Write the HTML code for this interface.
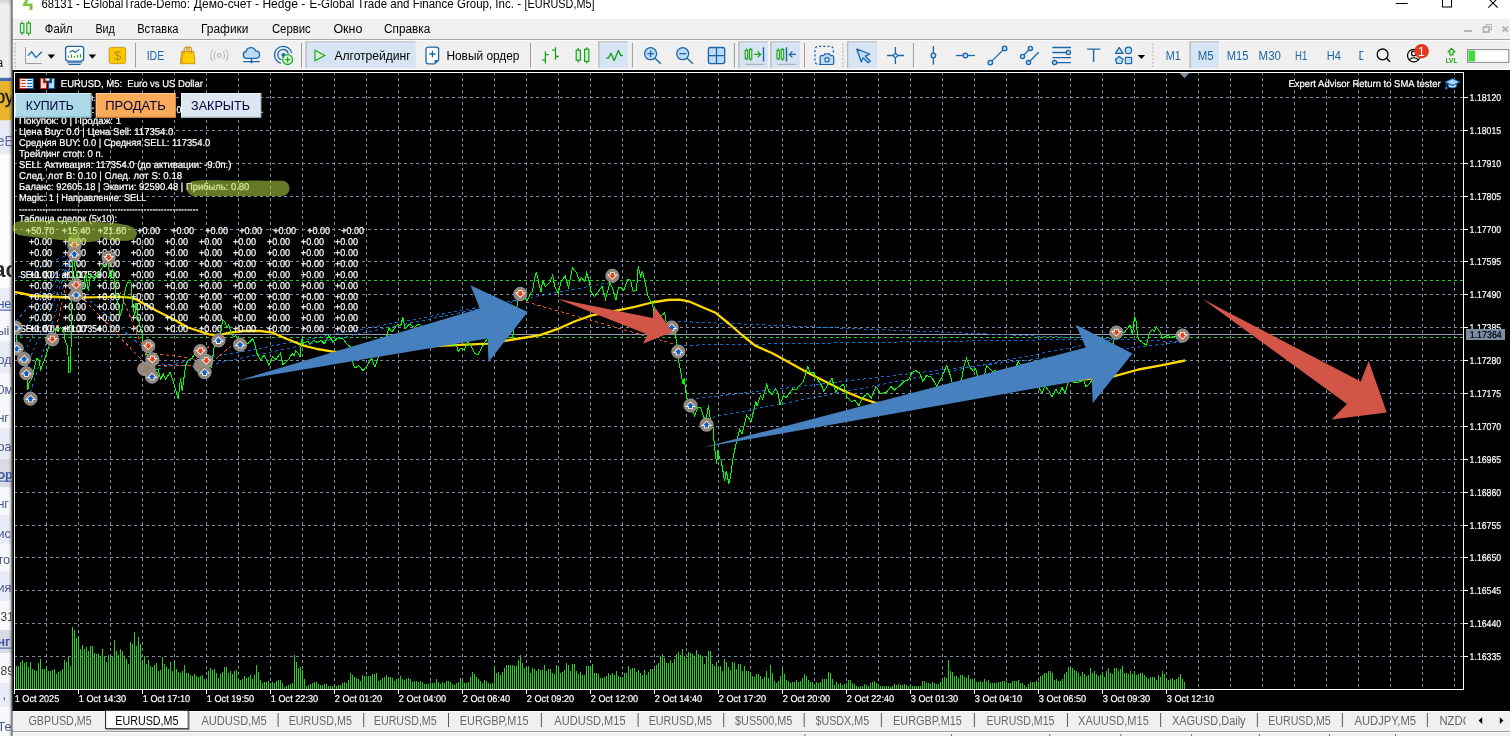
<!DOCTYPE html>
<html lang="ru"><head><meta charset="utf-8"><title>EURUSD,M5</title>
<style>html,body{margin:0;padding:0;background:#f0f0f0;overflow:hidden}svg{display:block;will-change:transform}text{font-family:"Liberation Sans",sans-serif;white-space:pre}.ui{font-size:12px;fill:#000}.tf{font-size:12.5px;fill:#1c64a6}.tab{font-size:12.3px;fill:#676767}.ct{text-rendering:geometricPrecision;font-size:9.9px;fill:#fff;stroke:#fff;stroke-width:0.22px}.ax{text-rendering:geometricPrecision;font-size:9.9px;fill:#fff;stroke:#fff;stroke-width:0.2px}.btn{font-size:12px;fill:#00003c}</style></head>
<body>
<svg width="1510" height="736" viewBox="0 0 1510 736">
<rect x="12" y="70" width="1498" height="641" fill="#000"/>
<clipPath id="cc"><rect x="15" y="73" width="1448" height="616"/></clipPath>
<path d="M46.5,72V689M78.5,72V689M110.5,72V689M142.5,72V689M174.5,72V689M206.5,72V689M238.5,72V689M270.5,72V689M302.5,72V689M334.5,72V689M366.5,72V689M398.5,72V689M430.5,72V689M462.5,72V689M494.5,72V689M526.5,72V689M558.5,72V689M590.5,72V689M622.5,72V689M654.5,72V689M686.5,72V689M718.5,72V689M750.5,72V689M782.5,72V689M814.5,72V689M846.5,72V689M878.5,72V689M910.5,72V689M942.5,72V689M974.5,72V689M1006.5,72V689M1038.5,72V689M1070.5,72V689M1102.5,72V689M1134.5,72V689M1166.5,72V689M1198.5,72V689M1230.5,72V689M1262.5,72V689M1294.5,72V689M1326.5,72V689M1358.5,72V689M1390.5,72V689M1422.5,72V689M1454.5,72V689" stroke="#7d8ba1" stroke-width="1" stroke-dasharray="3 3" fill="none" shape-rendering="crispEdges"/>
<path d="M14,97.5H1463M14,130.5H1463M14,163.5H1463M14,196.5H1463M14,229.5H1463M14,261.5H1463M14,294.5H1463M14,327.5H1463M14,360.5H1463M14,393.5H1463M14,426.5H1463M14,459.5H1463M14,492.5H1463M14,525.5H1463M14,557.5H1463M14,590.5H1463M14,623.5H1463M14,656.5H1463" stroke="#7d8ba1" stroke-width="1" stroke-dasharray="3 3" fill="none" shape-rendering="crispEdges"/>
<g clip-path="url(#cc)">
<path d="M16.5,689V666M18.5,689V666M20.5,689V662M22.5,689V660M24.5,689V663M26.5,689V662M28.5,689V667M30.5,689V662M32.5,689V669M34.5,689V670M36.5,689V671M38.5,689V663M40.5,689V659M42.5,689V669M44.5,689V669M46.5,689V666M48.5,689V671M50.5,689V671M52.5,689V670M54.5,689V669M56.5,689V674M58.5,689V672M60.5,689V671M62.5,689V669M64.5,689V660M66.5,689V662M68.5,689V656M70.5,689V666M72.5,689V627M74.5,689V630M76.5,689V638M78.5,689V636M80.5,689V649M82.5,689V645M84.5,689V649M86.5,689V647M88.5,689V651M90.5,689V646M92.5,689V646M94.5,689V653M96.5,689V654M98.5,689V654M100.5,689V656M102.5,689V649M104.5,689V657M106.5,689V662M108.5,689V655M110.5,689V656M112.5,689V657M114.5,689V640M116.5,689V651M118.5,689V655M120.5,689V649M122.5,689V651M124.5,689V656M126.5,689V659M128.5,689V664M130.5,689V642M132.5,689V644M134.5,689V632M136.5,689V646M138.5,689V637M140.5,689V644M142.5,689V662M144.5,689V656M146.5,689V664M148.5,689V660M150.5,689V666M152.5,689V667M154.5,689V665M156.5,689V663M158.5,689V671M160.5,689V670M162.5,689V657M164.5,689V664M166.5,689V667M168.5,689V669M170.5,689V662M172.5,689V671M174.5,689V662M176.5,689V669M178.5,689V672M180.5,689V673M182.5,689V671M184.5,689V665M186.5,689V673M188.5,689V673M190.5,689V675M192.5,689V676M194.5,689V674M196.5,689V676M198.5,689V677M200.5,689V676M202.5,689V675M204.5,689V679M206.5,689V680M208.5,689V671M210.5,689V668M212.5,689V670M214.5,689V669M216.5,689V673M218.5,689V678M220.5,689V674M222.5,689V672M224.5,689V667M226.5,689V667M228.5,689V673M230.5,689V671M232.5,689V674M234.5,689V671M236.5,689V670M238.5,689V679M240.5,689V680M242.5,689V679M244.5,689V676M246.5,689V678M248.5,689V677M250.5,689V675M252.5,689V679M254.5,689V675M256.5,689V665M258.5,689V672M260.5,689V680M262.5,689V683M264.5,689V682M266.5,689V682M268.5,689V681M270.5,689V683M272.5,689V682M274.5,689V683M276.5,689V681M278.5,689V680M280.5,689V680M282.5,689V683M284.5,689V687M286.5,689V686M288.5,689V685M290.5,689V684M292.5,689V683M294.5,689V655M296.5,689V662M298.5,689V668M300.5,689V667M302.5,689V670M304.5,689V679M306.5,689V686M308.5,689V685M310.5,689V684M312.5,689V683M314.5,689V682M316.5,689V682M318.5,689V684M320.5,689V685M322.5,689V685M324.5,689V684M326.5,689V684M328.5,689V686M330.5,689V686M332.5,689V686M334.5,689V686M336.5,689V686M338.5,689V685M340.5,689V685M342.5,689V683M344.5,689V682M346.5,689V683M348.5,689V680M350.5,689V673M352.5,689V675M354.5,689V677M356.5,689V678M358.5,689V679M360.5,689V681M362.5,689V675M364.5,689V676M366.5,689V676M368.5,689V676M370.5,689V676M372.5,689V674M374.5,689V674M376.5,689V673M378.5,689V681M380.5,689V680M382.5,689V678M384.5,689V677M386.5,689V675M388.5,689V677M390.5,689V677M392.5,689V678M394.5,689V681M396.5,689V679M398.5,689V679M400.5,689V676M402.5,689V679M404.5,689V680M406.5,689V679M408.5,689V678M410.5,689V679M412.5,689V682M414.5,689V681M416.5,689V681M418.5,689V682M420.5,689V681M422.5,689V682M424.5,689V684M426.5,689V684M428.5,689V684M430.5,689V682M432.5,689V683M434.5,689V683M436.5,689V679M438.5,689V682M440.5,689V684M442.5,689V682M444.5,689V683M446.5,689V681M448.5,689V681M450.5,689V682M452.5,689V684M454.5,689V685M456.5,689V683M458.5,689V682M460.5,689V678M462.5,689V681M464.5,689V683M466.5,689V683M468.5,689V682M470.5,689V677M472.5,689V672M474.5,689V674M476.5,689V677M478.5,689V679M480.5,689V681M482.5,689V683M484.5,689V680M486.5,689V681M488.5,689V683M490.5,689V684M492.5,689V683M494.5,689V666M496.5,689V673M498.5,689V672M500.5,689V675M502.5,689V672M504.5,689V668M506.5,689V665M508.5,689V665M510.5,689V665M512.5,689V665M514.5,689V666M516.5,689V666M518.5,689V660M520.5,689V655M522.5,689V663M524.5,689V668M526.5,689V667M528.5,689V666M530.5,689V673M532.5,689V668M534.5,689V669M536.5,689V671M538.5,689V669M540.5,689V670M542.5,689V670M544.5,689V665M546.5,689V671M548.5,689V669M550.5,689V669M552.5,689V673M554.5,689V674M556.5,689V665M558.5,689V667M560.5,689V673M562.5,689V672M564.5,689V670M566.5,689V663M568.5,689V665M570.5,689V671M572.5,689V664M574.5,689V664M576.5,689V671M578.5,689V674M580.5,689V672M582.5,689V675M584.5,689V675M586.5,689V666M588.5,689V666M590.5,689V666M592.5,689V664M594.5,689V673M596.5,689V673M598.5,689V674M600.5,689V678M602.5,689V678M604.5,689V677M606.5,689V676M608.5,689V673M610.5,689V675M612.5,689V673M614.5,689V675M616.5,689V671M618.5,689V676M620.5,689V677M622.5,689V677M624.5,689V673M626.5,689V673M628.5,689V666M630.5,689V669M632.5,689V668M634.5,689V668M636.5,689V672M638.5,689V670M640.5,689V673M642.5,689V675M644.5,689V670M646.5,689V675M648.5,689V672M650.5,689V669M652.5,689V669M654.5,689V669M656.5,689V665M658.5,689V663M660.5,689V656M662.5,689V654M664.5,689V658M666.5,689V663M668.5,689V663M670.5,689V660M672.5,689V663M674.5,689V659M676.5,689V654M678.5,689V652M680.5,689V655M682.5,689V649M684.5,689V656M686.5,689V658M688.5,689V652M690.5,689V653M692.5,689V654M694.5,689V657M696.5,689V650M698.5,689V654M700.5,689V655M702.5,689V656M704.5,689V664M706.5,689V657M708.5,689V651M710.5,689V651M712.5,689V664M714.5,689V666M716.5,689V662M718.5,689V667M720.5,689V666M722.5,689V671M724.5,689V659M726.5,689V662M728.5,689V667M730.5,689V670M732.5,689V662M734.5,689V663M736.5,689V669M738.5,689V664M740.5,689V664M742.5,689V671M744.5,689V666M746.5,689V671M748.5,689V671M750.5,689V672M752.5,689V676M754.5,689V677M756.5,689V674M758.5,689V674M760.5,689V676M762.5,689V679M764.5,689V677M766.5,689V671M768.5,689V678M770.5,689V665M772.5,689V673M774.5,689V681M776.5,689V683M778.5,689V681M780.5,689V676M782.5,689V669M784.5,689V674M786.5,689V680M788.5,689V681M790.5,689V683M792.5,689V682M794.5,689V682M796.5,689V680M798.5,689V682M800.5,689V681M802.5,689V678M804.5,689V674M806.5,689V676M808.5,689V680M810.5,689V682M812.5,689V682M814.5,689V684M816.5,689V682M818.5,689V683M820.5,689V682M822.5,689V679M824.5,689V679M826.5,689V679M828.5,689V672M830.5,689V673M832.5,689V679M834.5,689V685M836.5,689V682M838.5,689V684M840.5,689V683M842.5,689V685M844.5,689V684M846.5,689V683M848.5,689V680M850.5,689V680M852.5,689V683M854.5,689V684M856.5,689V686M858.5,689V687M860.5,689V686M862.5,689V686M864.5,689V684M866.5,689V685M868.5,689V686M870.5,689V683M872.5,689V682M874.5,689V681M876.5,689V683M878.5,689V684M880.5,689V686M882.5,689V686M884.5,689V686M886.5,689V686M888.5,689V686M890.5,689V687M892.5,689V686M894.5,689V684M896.5,689V685M898.5,689V684M900.5,689V685M902.5,689V685M904.5,689V684M906.5,689V685M908.5,689V686M910.5,689V686M912.5,689V686M914.5,689V686M916.5,689V686M918.5,689V686M920.5,689V686M922.5,689V681M924.5,689V681M926.5,689V683M928.5,689V683M930.5,689V684M932.5,689V682M934.5,689V683M936.5,689V684M938.5,689V684M940.5,689V682M942.5,689V678M944.5,689V677M946.5,689V678M948.5,689V660M950.5,689V671M952.5,689V672M954.5,689V676M956.5,689V676M958.5,689V678M960.5,689V675M962.5,689V675M964.5,689V677M966.5,689V678M968.5,689V675M970.5,689V679M972.5,689V679M974.5,689V681M976.5,689V682M978.5,689V682M980.5,689V681M982.5,689V682M984.5,689V679M986.5,689V681M988.5,689V680M990.5,689V683M992.5,689V683M994.5,689V683M996.5,689V683M998.5,689V682M1000.5,689V682M1002.5,689V681M1004.5,689V681M1006.5,689V682M1008.5,689V683M1010.5,689V683M1012.5,689V681M1014.5,689V681M1016.5,689V681M1018.5,689V680M1020.5,689V683M1022.5,689V683M1024.5,689V685M1026.5,689V687M1028.5,689V684M1030.5,689V682M1032.5,689V682M1034.5,689V682M1036.5,689V681M1038.5,689V682M1040.5,689V676M1042.5,689V675M1044.5,689V673M1046.5,689V673M1048.5,689V671M1050.5,689V671M1052.5,689V673M1054.5,689V680M1056.5,689V679M1058.5,689V681M1060.5,689V681M1062.5,689V679M1064.5,689V674M1066.5,689V672M1068.5,689V667M1070.5,689V669M1072.5,689V668M1074.5,689V670M1076.5,689V671M1078.5,689V673M1080.5,689V676M1082.5,689V672M1084.5,689V674M1086.5,689V676M1088.5,689V675M1090.5,689V668M1092.5,689V673M1094.5,689V671M1096.5,689V674M1098.5,689V676M1100.5,689V675M1102.5,689V672M1104.5,689V677M1106.5,689V671M1108.5,689V668M1110.5,689V673M1112.5,689V674M1114.5,689V668M1116.5,689V668M1118.5,689V671M1120.5,689V669M1122.5,689V666M1124.5,689V673M1126.5,689V673M1128.5,689V674M1130.5,689V671M1132.5,689V674M1134.5,689V671M1136.5,689V675M1138.5,689V674M1140.5,689V673M1142.5,689V673M1144.5,689V675M1146.5,689V677M1148.5,689V679M1150.5,689V677M1152.5,689V677M1154.5,689V677M1156.5,689V680M1158.5,689V675M1160.5,689V677M1162.5,689V671M1164.5,689V674M1166.5,689V680M1168.5,689V680M1170.5,689V679M1172.5,689V678M1174.5,689V680M1176.5,689V679M1178.5,689V677M1180.5,689V674M1182.5,689V679M1184.5,689V682" stroke="#2fc92f" stroke-width="1" fill="none" shape-rendering="crispEdges"/>
<path d="M14,280.5H1463M14,337.5H1463" stroke="#2ccb2c" stroke-width="1" stroke-dasharray="3 3" fill="none" shape-rendering="crispEdges"/>
<path d="M14,334.5H1463" stroke="#8f9bb0" stroke-width="1" fill="none" shape-rendering="crispEdges"/>
<path d="M16.0,321.4L74.4,251.7M16.7,342.3L74.4,251.7M24.2,352.7L74.4,251.7M26.4,366.9L74.4,251.7M30.5,392.4L74.4,251.7M76.2,288.5L148.3,352.4M152.0,370.3L200.4,357.5M144.3,362.6L206.3,367.2M204.6,365.8L520.3,300.2M200.4,359.5L612.4,282.1M671.7,321.2L1182.5,341.9M690.5,399.2L1182.5,341.9M678.3,345.3L1116.4,338.8M706.6,418.4L1116.4,338.8M-20.0,294.5L74.4,251.7" stroke="#0b6acb" stroke-width="1" stroke-dasharray="3 3" fill="none" shape-rendering="crispEdges"/>
<path d="M52.3,345.6L74.4,247.7M108.6,263.9L152.0,370.3M76.2,291.4L144.3,362.6M148.3,352.4L200.4,359.5M152.4,365.7L204.6,365.8M200.4,357.5L218.5,334.0M206.3,367.2L240.1,338.4M520.3,300.2L678.3,345.3" stroke="#e8501e" stroke-width="1" stroke-dasharray="3 3" fill="none" shape-rendering="crispEdges"/>
<polyline points="14.0,292.0 20.0,293.0 34.5,296.0 71.0,297.5 100.0,297.2 117.7,296.6 130.0,297.6 137.0,299.7 147.0,305.6 157.0,311.0 174.4,319.8 188.0,327.5 209.0,334.4 217.5,335.3 229.5,332.7 243.3,331.0 260.5,331.0 272.6,332.7 286.4,338.7 303.6,345.6 317.3,349.0 332.8,351.7 360.0,352.5 400.0,349.0 438.5,345.8 488.0,343.7 510.0,340.0 540.0,335.2 557.2,329.2 574.4,321.5 591.7,315.4 614.0,311.1 634.7,306.8 652.0,302.5 667.4,300.0 679.5,299.6 689.8,301.7 703.6,307.7 715.6,312.8 729.4,324.0 743.2,336.0 755.2,345.6 772.4,353.3 789.7,362.8 807.8,372.7 826.2,382.0 844.7,391.2 860.9,398.0 874.7,402.7 900.0,404.5 930.0,401.5 960.0,397.0 1000.0,390.0 1040.0,384.0 1074.8,380.4 1113.6,376.4 1138.4,369.5 1162.3,365.1 1185.1,360.5" fill="none" stroke="#ffd800" stroke-width="2.3" stroke-linejoin="round"/>
</g>
<text x="19.0" y="101.0" class="ct" textLength="76.3" lengthAdjust="spacingAndGlyphs">Return to SMA: стати.</text>
<text x="19.0" y="112.9" class="ct" textLength="75.5" lengthAdjust="spacingAndGlyphs">Серия: 4 | Шаг:</text>
<text x="100.0" y="112.9" class="ct" textLength="73.0" lengthAdjust="spacingAndGlyphs">SELL-сетка: акт</text>
<text x="176.6" y="112.9" class="ct" textLength="4.8" lengthAdjust="spacingAndGlyphs">0</text>
<text x="186.0" y="112.9" class="ct" textLength="77.4" lengthAdjust="spacingAndGlyphs">Ожидание сигнала.</text>
<text x="19.0" y="123.9" class="ct" textLength="102.3" lengthAdjust="spacingAndGlyphs">Покупок: 0 | Продаж: 1</text>
<text x="19.0" y="134.8" class="ct" textLength="154.4" lengthAdjust="spacingAndGlyphs">Цена Buy: 0.0 | Цена Sell: 117354.0</text>
<text x="19.0" y="145.8" class="ct" textLength="191.3" lengthAdjust="spacingAndGlyphs">Средняя BUY: 0.0 | Средняя SELL: 117354.0</text>
<text x="19.0" y="156.7" class="ct" textLength="84.4" lengthAdjust="spacingAndGlyphs">Трейлинг стоп: 0 п.</text>
<text x="19.0" y="167.7" class="ct" textLength="212.4" lengthAdjust="spacingAndGlyphs">SELL Активация: 117354.0 (до активации: -9.0п.)</text>
<text x="19.0" y="178.6" class="ct" textLength="163.2" lengthAdjust="spacingAndGlyphs">След. лот B: 0.10 | След. лот S: 0.18</text>
<text x="19.0" y="189.6" class="ct" textLength="230.2" lengthAdjust="spacingAndGlyphs">Баланс: 92605.18 | Эквити: 92590.48 | Прибыль: 0.80</text>
<text x="19.0" y="200.6" class="ct" textLength="127.4" lengthAdjust="spacingAndGlyphs">Magic: 1 | Направление: SELL</text>
<text x="19.3" y="211.95" class="ct" textLength="179.0" lengthAdjust="spacing" style="font-size:7.4px;stroke-width:0.3px">--------------------------------------------------------------</text>
<text x="19.0" y="222.4" class="ct" textLength="98.1" lengthAdjust="spacingAndGlyphs">Таблица сделок (5x10):</text>
<text x="25.8" y="234.1" class="ct" textLength="28.5" lengthAdjust="spacingAndGlyphs">+50.70</text>
<text x="62.0" y="234.1" class="ct" textLength="28.5" lengthAdjust="spacingAndGlyphs">+15.40</text>
<text x="97.8" y="234.1" class="ct" textLength="28.5" lengthAdjust="spacingAndGlyphs">+21.60</text>
<text x="137.2" y="234.1" class="ct" textLength="23.0" lengthAdjust="spacingAndGlyphs">+0.00</text>
<text x="171.2" y="234.1" class="ct" textLength="23.0" lengthAdjust="spacingAndGlyphs">+0.00</text>
<text x="205.2" y="234.1" class="ct" textLength="23.0" lengthAdjust="spacingAndGlyphs">+0.00</text>
<text x="239.2" y="234.1" class="ct" textLength="23.0" lengthAdjust="spacingAndGlyphs">+0.00</text>
<text x="273.2" y="234.1" class="ct" textLength="23.0" lengthAdjust="spacingAndGlyphs">+0.00</text>
<text x="307.2" y="234.1" class="ct" textLength="23.0" lengthAdjust="spacingAndGlyphs">+0.00</text>
<text x="341.2" y="234.1" class="ct" textLength="23.0" lengthAdjust="spacingAndGlyphs">+0.00</text>
<text x="29.0" y="244.8" class="ct" textLength="23.0" lengthAdjust="spacingAndGlyphs">+0.00</text>
<text x="63.0" y="244.8" class="ct" textLength="23.0" lengthAdjust="spacingAndGlyphs">+0.00</text>
<text x="97.0" y="244.8" class="ct" textLength="23.0" lengthAdjust="spacingAndGlyphs">+0.00</text>
<text x="131.0" y="244.8" class="ct" textLength="23.0" lengthAdjust="spacingAndGlyphs">+0.00</text>
<text x="165.0" y="244.8" class="ct" textLength="23.0" lengthAdjust="spacingAndGlyphs">+0.00</text>
<text x="199.0" y="244.8" class="ct" textLength="23.0" lengthAdjust="spacingAndGlyphs">+0.00</text>
<text x="233.0" y="244.8" class="ct" textLength="23.0" lengthAdjust="spacingAndGlyphs">+0.00</text>
<text x="267.0" y="244.8" class="ct" textLength="23.0" lengthAdjust="spacingAndGlyphs">+0.00</text>
<text x="301.0" y="244.8" class="ct" textLength="23.0" lengthAdjust="spacingAndGlyphs">+0.00</text>
<text x="335.0" y="244.8" class="ct" textLength="23.0" lengthAdjust="spacingAndGlyphs">+0.00</text>
<text x="29.0" y="255.8" class="ct" textLength="23.0" lengthAdjust="spacingAndGlyphs">+0.00</text>
<text x="63.0" y="255.8" class="ct" textLength="23.0" lengthAdjust="spacingAndGlyphs">+0.00</text>
<text x="97.0" y="255.8" class="ct" textLength="23.0" lengthAdjust="spacingAndGlyphs">+0.00</text>
<text x="131.0" y="255.8" class="ct" textLength="23.0" lengthAdjust="spacingAndGlyphs">+0.00</text>
<text x="165.0" y="255.8" class="ct" textLength="23.0" lengthAdjust="spacingAndGlyphs">+0.00</text>
<text x="199.0" y="255.8" class="ct" textLength="23.0" lengthAdjust="spacingAndGlyphs">+0.00</text>
<text x="233.0" y="255.8" class="ct" textLength="23.0" lengthAdjust="spacingAndGlyphs">+0.00</text>
<text x="267.0" y="255.8" class="ct" textLength="23.0" lengthAdjust="spacingAndGlyphs">+0.00</text>
<text x="301.0" y="255.8" class="ct" textLength="23.0" lengthAdjust="spacingAndGlyphs">+0.00</text>
<text x="335.0" y="255.8" class="ct" textLength="23.0" lengthAdjust="spacingAndGlyphs">+0.00</text>
<text x="29.0" y="266.7" class="ct" textLength="23.0" lengthAdjust="spacingAndGlyphs">+0.00</text>
<text x="63.0" y="266.7" class="ct" textLength="23.0" lengthAdjust="spacingAndGlyphs">+0.00</text>
<text x="97.0" y="266.7" class="ct" textLength="23.0" lengthAdjust="spacingAndGlyphs">+0.00</text>
<text x="131.0" y="266.7" class="ct" textLength="23.0" lengthAdjust="spacingAndGlyphs">+0.00</text>
<text x="165.0" y="266.7" class="ct" textLength="23.0" lengthAdjust="spacingAndGlyphs">+0.00</text>
<text x="199.0" y="266.7" class="ct" textLength="23.0" lengthAdjust="spacingAndGlyphs">+0.00</text>
<text x="233.0" y="266.7" class="ct" textLength="23.0" lengthAdjust="spacingAndGlyphs">+0.00</text>
<text x="267.0" y="266.7" class="ct" textLength="23.0" lengthAdjust="spacingAndGlyphs">+0.00</text>
<text x="301.0" y="266.7" class="ct" textLength="23.0" lengthAdjust="spacingAndGlyphs">+0.00</text>
<text x="335.0" y="266.7" class="ct" textLength="23.0" lengthAdjust="spacingAndGlyphs">+0.00</text>
<text x="29.0" y="277.6" class="ct" textLength="23.0" lengthAdjust="spacingAndGlyphs">+0.00</text>
<text x="63.0" y="277.6" class="ct" textLength="23.0" lengthAdjust="spacingAndGlyphs">+0.00</text>
<text x="97.0" y="277.6" class="ct" textLength="23.0" lengthAdjust="spacingAndGlyphs">+0.00</text>
<text x="131.0" y="277.6" class="ct" textLength="23.0" lengthAdjust="spacingAndGlyphs">+0.00</text>
<text x="165.0" y="277.6" class="ct" textLength="23.0" lengthAdjust="spacingAndGlyphs">+0.00</text>
<text x="199.0" y="277.6" class="ct" textLength="23.0" lengthAdjust="spacingAndGlyphs">+0.00</text>
<text x="233.0" y="277.6" class="ct" textLength="23.0" lengthAdjust="spacingAndGlyphs">+0.00</text>
<text x="267.0" y="277.6" class="ct" textLength="23.0" lengthAdjust="spacingAndGlyphs">+0.00</text>
<text x="301.0" y="277.6" class="ct" textLength="23.0" lengthAdjust="spacingAndGlyphs">+0.00</text>
<text x="335.0" y="277.6" class="ct" textLength="23.0" lengthAdjust="spacingAndGlyphs">+0.00</text>
<text x="29.0" y="288.6" class="ct" textLength="23.0" lengthAdjust="spacingAndGlyphs">+0.00</text>
<text x="63.0" y="288.6" class="ct" textLength="23.0" lengthAdjust="spacingAndGlyphs">+0.00</text>
<text x="97.0" y="288.6" class="ct" textLength="23.0" lengthAdjust="spacingAndGlyphs">+0.00</text>
<text x="131.0" y="288.6" class="ct" textLength="23.0" lengthAdjust="spacingAndGlyphs">+0.00</text>
<text x="165.0" y="288.6" class="ct" textLength="23.0" lengthAdjust="spacingAndGlyphs">+0.00</text>
<text x="199.0" y="288.6" class="ct" textLength="23.0" lengthAdjust="spacingAndGlyphs">+0.00</text>
<text x="233.0" y="288.6" class="ct" textLength="23.0" lengthAdjust="spacingAndGlyphs">+0.00</text>
<text x="267.0" y="288.6" class="ct" textLength="23.0" lengthAdjust="spacingAndGlyphs">+0.00</text>
<text x="301.0" y="288.6" class="ct" textLength="23.0" lengthAdjust="spacingAndGlyphs">+0.00</text>
<text x="335.0" y="288.6" class="ct" textLength="23.0" lengthAdjust="spacingAndGlyphs">+0.00</text>
<text x="29.0" y="299.5" class="ct" textLength="23.0" lengthAdjust="spacingAndGlyphs">+0.00</text>
<text x="63.0" y="299.5" class="ct" textLength="23.0" lengthAdjust="spacingAndGlyphs">+0.00</text>
<text x="97.0" y="299.5" class="ct" textLength="23.0" lengthAdjust="spacingAndGlyphs">+0.00</text>
<text x="131.0" y="299.5" class="ct" textLength="23.0" lengthAdjust="spacingAndGlyphs">+0.00</text>
<text x="165.0" y="299.5" class="ct" textLength="23.0" lengthAdjust="spacingAndGlyphs">+0.00</text>
<text x="199.0" y="299.5" class="ct" textLength="23.0" lengthAdjust="spacingAndGlyphs">+0.00</text>
<text x="233.0" y="299.5" class="ct" textLength="23.0" lengthAdjust="spacingAndGlyphs">+0.00</text>
<text x="267.0" y="299.5" class="ct" textLength="23.0" lengthAdjust="spacingAndGlyphs">+0.00</text>
<text x="301.0" y="299.5" class="ct" textLength="23.0" lengthAdjust="spacingAndGlyphs">+0.00</text>
<text x="335.0" y="299.5" class="ct" textLength="23.0" lengthAdjust="spacingAndGlyphs">+0.00</text>
<text x="29.0" y="310.4" class="ct" textLength="23.0" lengthAdjust="spacingAndGlyphs">+0.00</text>
<text x="63.0" y="310.4" class="ct" textLength="23.0" lengthAdjust="spacingAndGlyphs">+0.00</text>
<text x="97.0" y="310.4" class="ct" textLength="23.0" lengthAdjust="spacingAndGlyphs">+0.00</text>
<text x="131.0" y="310.4" class="ct" textLength="23.0" lengthAdjust="spacingAndGlyphs">+0.00</text>
<text x="165.0" y="310.4" class="ct" textLength="23.0" lengthAdjust="spacingAndGlyphs">+0.00</text>
<text x="199.0" y="310.4" class="ct" textLength="23.0" lengthAdjust="spacingAndGlyphs">+0.00</text>
<text x="233.0" y="310.4" class="ct" textLength="23.0" lengthAdjust="spacingAndGlyphs">+0.00</text>
<text x="267.0" y="310.4" class="ct" textLength="23.0" lengthAdjust="spacingAndGlyphs">+0.00</text>
<text x="301.0" y="310.4" class="ct" textLength="23.0" lengthAdjust="spacingAndGlyphs">+0.00</text>
<text x="335.0" y="310.4" class="ct" textLength="23.0" lengthAdjust="spacingAndGlyphs">+0.00</text>
<text x="29.0" y="321.3" class="ct" textLength="23.0" lengthAdjust="spacingAndGlyphs">+0.00</text>
<text x="63.0" y="321.3" class="ct" textLength="23.0" lengthAdjust="spacingAndGlyphs">+0.00</text>
<text x="97.0" y="321.3" class="ct" textLength="23.0" lengthAdjust="spacingAndGlyphs">+0.00</text>
<text x="131.0" y="321.3" class="ct" textLength="23.0" lengthAdjust="spacingAndGlyphs">+0.00</text>
<text x="165.0" y="321.3" class="ct" textLength="23.0" lengthAdjust="spacingAndGlyphs">+0.00</text>
<text x="199.0" y="321.3" class="ct" textLength="23.0" lengthAdjust="spacingAndGlyphs">+0.00</text>
<text x="233.0" y="321.3" class="ct" textLength="23.0" lengthAdjust="spacingAndGlyphs">+0.00</text>
<text x="267.0" y="321.3" class="ct" textLength="23.0" lengthAdjust="spacingAndGlyphs">+0.00</text>
<text x="301.0" y="321.3" class="ct" textLength="23.0" lengthAdjust="spacingAndGlyphs">+0.00</text>
<text x="335.0" y="321.3" class="ct" textLength="23.0" lengthAdjust="spacingAndGlyphs">+0.00</text>
<text x="29.0" y="332.3" class="ct" textLength="23.0" lengthAdjust="spacingAndGlyphs">+0.00</text>
<text x="63.0" y="332.3" class="ct" textLength="23.0" lengthAdjust="spacingAndGlyphs">+0.00</text>
<text x="97.0" y="332.3" class="ct" textLength="23.0" lengthAdjust="spacingAndGlyphs">+0.00</text>
<text x="131.0" y="332.3" class="ct" textLength="23.0" lengthAdjust="spacingAndGlyphs">+0.00</text>
<text x="165.0" y="332.3" class="ct" textLength="23.0" lengthAdjust="spacingAndGlyphs">+0.00</text>
<text x="199.0" y="332.3" class="ct" textLength="23.0" lengthAdjust="spacingAndGlyphs">+0.00</text>
<text x="233.0" y="332.3" class="ct" textLength="23.0" lengthAdjust="spacingAndGlyphs">+0.00</text>
<text x="267.0" y="332.3" class="ct" textLength="23.0" lengthAdjust="spacingAndGlyphs">+0.00</text>
<text x="301.0" y="332.3" class="ct" textLength="23.0" lengthAdjust="spacingAndGlyphs">+0.00</text>
<text x="335.0" y="332.3" class="ct" textLength="23.0" lengthAdjust="spacingAndGlyphs">+0.00</text>
<text x="20.2" y="277.6" class="ct" textLength="81.5" lengthAdjust="spacingAndGlyphs">SELL 0.01 at 1.17538</text>
<text x="20.2" y="332.3" class="ct" textLength="81.5" lengthAdjust="spacingAndGlyphs">SELL 0.04 at 1.17354</text>
<g clip-path="url(#cc)">
<polyline points="16.0,328.0 17.0,348.0 24.0,359.0 26.4,373.0 27.9,390.4 28.6,383.5 32.4,377.7 34.7,365.8 36.9,358.3 39.1,360.5 40.6,369.5 44.4,359.8 48.9,346.3 52.3,339.0 56.3,329.9 60.8,327.7 63.8,331.4 65.3,341.9 67.5,346.3 69.0,373.2 70.5,371.7 71.3,334.4 71.6,300.0 72.4,266.7 73.6,254.5 74.8,266.7 78.5,279.0 81.0,293.6 83.4,286.0 85.9,274.0 88.3,291.0 90.7,274.0 94.4,279.0 98.0,274.0 103.0,266.7 107.9,261.8 110.3,279.0 112.8,269.0 115.2,288.7 117.7,303.4 120.1,315.6 122.5,308.0 125.0,291.0 127.4,282.6 131.0,282.6 132.3,303.4 134.8,315.6 136.0,303.4 138.5,320.5 142.0,332.8 143.4,345.0 146.0,352.0 150.0,362.0 154.0,370.0 158.0,368.9 160.7,379.2 163.2,374.0 165.8,379.2 170.0,372.3 173.6,382.6 178.2,399.0 180.5,378.3 182.2,391.3 185.6,365.4 188.2,360.3 191.7,358.5 194.2,355.0 198.0,352.0 202.0,358.0 206.0,366.0 211.5,367.0 214.0,348.0 215.8,344.8 221.0,331.0 222.6,319.8 225.2,322.4 227.0,327.5 228.7,325.0 231.3,332.7 233.8,337.0 235.6,335.3 240.0,343.0 244.0,345.0 248.5,343.0 252.8,338.7 255.4,346.5 257.0,353.4 260.5,360.3 264.0,355.0 269.0,365.4 272.6,356.8 276.0,359.4 280.3,353.4 283.0,364.6 288.0,360.3 292.4,353.4 294.0,356.0 295.8,350.8 298.4,353.4 300.0,356.8 301.8,338.7 303.6,343.0 307.9,341.3 309.6,343.9 313.9,340.5 317.3,342.2 320.8,340.5 324.2,343.9 328.5,336.0 331.1,338.7 332.8,342.2 338.0,337.9 343.0,338.7 346.6,343.9 350.0,346.5 351.8,360.3 355.0,368.0 358.7,365.4 363.0,370.6 367.3,365.4 371.6,358.5 375.0,367.1 377.6,358.5 381.0,352.0 384.0,345.0 386.9,336.0 388.6,328.0 392.0,332.0 397.2,324.6 400.7,325.8 402.9,317.0 405.0,329.2 409.3,324.0 414.4,327.5 418.7,324.0 425.0,330.0 432.0,336.0 440.0,340.0 448.0,343.0 456.6,345.5 458.3,351.6 461.0,348.0 464.4,350.0 467.8,341.0 471.3,346.4 474.7,353.3 478.0,355.0 481.6,348.0 487.6,337.8 495.0,344.0 503.0,336.0 512.6,337.8 513.4,331.0 516.9,306.8 517.7,300.0 520.3,293.0 527.2,300.8 529.8,294.8 532.4,291.3 534.1,281.0 536.3,272.0 538.4,281.0 541.0,292.0 542.7,280.0 545.3,287.0 549.6,282.7 552.7,275.0 554.8,287.0 558.2,293.0 560.8,282.7 565.1,275.8 566.8,281.9 568.5,287.0 572.5,268.0 576.3,272.4 579.7,281.0 581.4,277.5 584.9,281.9 586.6,273.2 589.2,281.0 590.9,291.3 594.4,296.5 597.8,292.2 602.1,286.2 605.5,299.0 609.9,282.7 612.4,287.9 615.9,300.0 618.5,287.9 621.0,287.0 623.6,290.5 628.0,279.3 630.5,280.1 633.0,291.3 636.5,290.5 638.2,266.0 640.7,277.5 642.4,270.7 645.0,281.9 647.6,294.8 650.2,300.8 652.8,303.4 653.6,318.0 660.0,316.0 664.0,313.7 664.8,312.8 665.7,320.6 671.7,327.5 675.2,333.5 676.9,344.7 678.3,351.6 678.5,360.0 680.8,371.6 683.0,384.3 684.2,378.5 686.6,397.0 690.5,405.5 694.6,415.4 698.1,407.4 700.4,407.4 703.9,417.7 706.2,418.9 708.5,405.0 709.6,415.4 713.0,427.0 714.3,445.4 716.6,464.0 717.7,450.0 719.6,458.2 721.2,460.5 724.6,481.2 726.3,470.8 728.8,483.5 730.4,477.8 732.7,459.3 736.2,443.0 739.7,429.3 742.0,433.9 746.6,415.4 751.2,421.2 755.8,401.6 757.0,406.2 760.4,395.8 762.7,399.3 766.7,384.3 768.5,391.2 772.0,394.6 775.4,389.0 777.8,392.3 780.0,405.0 783.5,395.8 785.8,398.1 792.8,388.9 796.2,390.0 798.5,386.6 803.2,382.0 807.8,366.5 810.1,372.7 813.5,372.7 819.3,382.0 821.6,385.4 823.9,391.2 827.4,385.4 832.0,378.5 835.5,392.3 838.9,387.7 843.6,384.3 847.0,397.0 851.6,401.6 855.1,400.4 859.0,406.0 862.0,398.1 867.8,393.5 871.3,398.1 875.9,386.6 880.5,393.5 886.3,392.3 890.9,386.6 894.4,390.0 900.0,385.5 904.0,381.4 908.9,379.4 911.9,372.5 915.9,370.5 919.9,373.4 922.8,381.4 926.8,375.4 931.8,377.4 936.8,386.4 941.7,377.4 946.7,365.5 949.7,373.4 952.0,382.0 958.0,385.0 961.6,379.4 963.6,367.5 966.6,358.5 969.5,366.5 973.5,371.5 975.5,368.5 977.5,375.4 981.0,380.0 985.4,372.5 986.4,365.5 989.4,368.5 992.4,371.5 995.4,370.5 1000.0,378.0 1005.0,376.0 1010.0,380.0 1016.2,366.5 1018.2,361.5 1020.2,364.5 1024.0,372.0 1028.0,378.0 1033.0,383.0 1039.0,387.4 1042.0,393.3 1045.0,385.4 1049.0,391.3 1052.0,397.3 1056.0,389.3 1059.0,394.3 1062.0,387.4 1065.0,393.3 1067.9,383.4 1068.9,380.4 1076.0,383.0 1083.8,380.4 1085.8,386.4 1088.8,384.4 1091.7,380.4 1098.0,368.0 1105.0,356.0 1112.6,343.6 1113.2,343.2 1114.6,337.7 1116.6,332.7 1124.2,332.3 1130.1,325.3 1132.5,334.6 1134.1,320.7 1134.4,315.8 1136.0,320.7 1137.7,335.9 1139.0,339.9 1146.4,345.5 1149.3,333.2 1152.3,329.3 1154.3,331.3 1156.3,326.6 1160.3,332.6 1162.3,338.5 1166.9,335.2 1168.9,335.6 1170.2,337.9 1172.8,336.6 1175.5,336.9 1182.0,335.5" fill="none" stroke="#00ff00" stroke-width="1" stroke-linejoin="miter" shape-rendering="crispEdges"/>
<circle cx="16.0" cy="327.7" r="6.6" fill="#96846f" stroke="#8f97a8" stroke-width="1"/><polygon points="16.0,324.8 19.5,328.3 17.6,328.3 17.6,330.5 14.4,330.5 14.4,328.3 12.5,328.3" fill="#0b5fc6" stroke="#fff" stroke-width="1.6" stroke-linejoin="miter" paint-order="stroke"/>
<circle cx="16.7" cy="348.6" r="6.6" fill="#96846f" stroke="#8f97a8" stroke-width="1"/><polygon points="16.7,345.7 20.2,349.2 18.3,349.2 18.3,351.4 15.1,351.4 15.1,349.2 13.2,349.2" fill="#0b5fc6" stroke="#fff" stroke-width="1.6" stroke-linejoin="miter" paint-order="stroke"/>
<circle cx="24.2" cy="359.0" r="6.6" fill="#96846f" stroke="#8f97a8" stroke-width="1"/><polygon points="24.2,356.1 27.7,359.6 25.8,359.6 25.8,361.8 22.6,361.8 22.6,359.6 20.7,359.6" fill="#0b5fc6" stroke="#fff" stroke-width="1.6" stroke-linejoin="miter" paint-order="stroke"/>
<circle cx="26.4" cy="373.2" r="6.6" fill="#96846f" stroke="#8f97a8" stroke-width="1"/><polygon points="26.4,370.3 29.9,373.8 28.0,373.8 28.0,376.0 24.8,376.0 24.8,373.8 22.9,373.8" fill="#0b5fc6" stroke="#fff" stroke-width="1.6" stroke-linejoin="miter" paint-order="stroke"/>
<circle cx="30.5" cy="398.7" r="6.6" fill="#96846f" stroke="#8f97a8" stroke-width="1"/><polygon points="30.5,395.8 34.0,399.3 32.1,399.3 32.1,401.5 28.9,401.5 28.9,399.3 27.0,399.3" fill="#0b5fc6" stroke="#fff" stroke-width="1.6" stroke-linejoin="miter" paint-order="stroke"/>
<circle cx="52.3" cy="339.3" r="6.6" fill="#96846f" stroke="#8f97a8" stroke-width="1"/><polygon points="52.3,342.2 55.8,338.7 53.9,338.7 53.9,336.5 50.7,336.5 50.7,338.7 48.8,338.7" fill="#e8421c" stroke="#fff" stroke-width="1.6" stroke-linejoin="miter" paint-order="stroke"/>
<circle cx="74.4" cy="245.4" r="6.6" fill="#96846f" stroke="#8f97a8" stroke-width="1"/><polygon points="74.4,248.3 77.9,244.8 76.0,244.8 76.0,242.6 72.8,242.6 72.8,244.8 70.9,244.8" fill="#e8421c" stroke="#fff" stroke-width="1.6" stroke-linejoin="miter" paint-order="stroke"/>
<circle cx="74.4" cy="254.0" r="6.6" fill="#96846f" stroke="#8f97a8" stroke-width="1"/><polygon points="74.4,251.1 77.9,254.6 76.0,254.6 76.0,256.8 72.8,256.8 72.8,254.6 70.9,254.6" fill="#0b5fc6" stroke="#fff" stroke-width="1.6" stroke-linejoin="miter" paint-order="stroke"/>
<circle cx="108.6" cy="257.6" r="6.6" fill="#96846f" stroke="#8f97a8" stroke-width="1"/><polygon points="108.6,260.5 112.1,257.0 110.2,257.0 110.2,254.8 107.0,254.8 107.0,257.0 105.1,257.0" fill="#e8421c" stroke="#fff" stroke-width="1.6" stroke-linejoin="miter" paint-order="stroke"/>
<circle cx="76.2" cy="294.8" r="6.6" fill="#96846f" stroke="#8f97a8" stroke-width="1"/><polygon points="76.2,291.9 79.7,295.4 77.8,295.4 77.8,297.6 74.6,297.6 74.6,295.4 72.7,295.4" fill="#0b5fc6" stroke="#fff" stroke-width="1.6" stroke-linejoin="miter" paint-order="stroke"/>
<circle cx="76.2" cy="285.1" r="6.6" fill="#96846f" stroke="#8f97a8" stroke-width="1"/><polygon points="76.2,288.0 79.7,284.5 77.8,284.5 77.8,282.3 74.6,282.3 74.6,284.5 72.7,284.5" fill="#e8421c" stroke="#fff" stroke-width="1.6" stroke-linejoin="miter" paint-order="stroke"/>
<circle cx="144.3" cy="368.9" r="6.6" fill="#96846f" stroke="#8f97a8" stroke-width="1"/>
<circle cx="148.6" cy="369.2" r="6.6" fill="#96846f" stroke="#8f97a8" stroke-width="1"/>
<circle cx="148.3" cy="346.1" r="6.6" fill="#96846f" stroke="#8f97a8" stroke-width="1"/><polygon points="148.3,349.0 151.8,345.5 149.9,345.5 149.9,343.3 146.7,343.3 146.7,345.5 144.8,345.5" fill="#e8421c" stroke="#fff" stroke-width="1.6" stroke-linejoin="miter" paint-order="stroke"/>
<circle cx="152.4" cy="359.4" r="6.6" fill="#96846f" stroke="#8f97a8" stroke-width="1"/><polygon points="152.4,362.3 155.9,358.8 154.0,358.8 154.0,356.6 150.8,356.6 150.8,358.8 148.9,358.8" fill="#e8421c" stroke="#fff" stroke-width="1.6" stroke-linejoin="miter" paint-order="stroke"/>
<circle cx="152.0" cy="376.6" r="6.6" fill="#96846f" stroke="#8f97a8" stroke-width="1"/><polygon points="152.0,373.7 155.5,377.2 153.6,377.2 153.6,379.4 150.4,379.4 150.4,377.2 148.5,377.2" fill="#0b5fc6" stroke="#fff" stroke-width="1.6" stroke-linejoin="miter" paint-order="stroke"/>
<circle cx="200.4" cy="365.8" r="6.6" fill="#96846f" stroke="#8f97a8" stroke-width="1"/>
<circle cx="200.4" cy="351.2" r="6.6" fill="#96846f" stroke="#8f97a8" stroke-width="1"/><polygon points="200.4,354.1 203.9,350.6 202.0,350.6 202.0,348.4 198.8,348.4 198.8,350.6 196.9,350.6" fill="#e8421c" stroke="#fff" stroke-width="1.6" stroke-linejoin="miter" paint-order="stroke"/>
<circle cx="206.3" cy="360.9" r="6.6" fill="#96846f" stroke="#8f97a8" stroke-width="1"/><polygon points="206.3,363.8 209.8,360.3 207.9,360.3 207.9,358.1 204.7,358.1 204.7,360.3 202.8,360.3" fill="#e8421c" stroke="#fff" stroke-width="1.6" stroke-linejoin="miter" paint-order="stroke"/>
<circle cx="204.6" cy="372.1" r="6.6" fill="#96846f" stroke="#8f97a8" stroke-width="1"/><polygon points="204.6,369.2 208.1,372.7 206.2,372.7 206.2,374.9 203.0,374.9 203.0,372.7 201.1,372.7" fill="#0b5fc6" stroke="#fff" stroke-width="1.6" stroke-linejoin="miter" paint-order="stroke"/>
<circle cx="218.5" cy="340.3" r="6.6" fill="#96846f" stroke="#8f97a8" stroke-width="1"/><polygon points="218.5,337.4 222.0,340.9 220.1,340.9 220.1,343.1 216.9,343.1 216.9,340.9 215.0,340.9" fill="#0b5fc6" stroke="#fff" stroke-width="1.6" stroke-linejoin="miter" paint-order="stroke"/>
<circle cx="240.1" cy="344.7" r="6.6" fill="#96846f" stroke="#8f97a8" stroke-width="1"/><polygon points="240.1,341.8 243.6,345.3 241.7,345.3 241.7,347.5 238.5,347.5 238.5,345.3 236.6,345.3" fill="#0b5fc6" stroke="#fff" stroke-width="1.6" stroke-linejoin="miter" paint-order="stroke"/>
<circle cx="520.3" cy="293.9" r="6.6" fill="#96846f" stroke="#8f97a8" stroke-width="1"/><polygon points="520.3,296.8 523.8,293.3 521.9,293.3 521.9,291.1 518.7,291.1 518.7,293.3 516.8,293.3" fill="#e8421c" stroke="#fff" stroke-width="1.6" stroke-linejoin="miter" paint-order="stroke"/>
<circle cx="612.4" cy="275.8" r="6.6" fill="#96846f" stroke="#8f97a8" stroke-width="1"/><polygon points="612.4,278.7 615.9,275.2 614.0,275.2 614.0,273.0 610.8,273.0 610.8,275.2 608.9,275.2" fill="#e8421c" stroke="#fff" stroke-width="1.6" stroke-linejoin="miter" paint-order="stroke"/>
<circle cx="671.7" cy="327.5" r="6.6" fill="#96846f" stroke="#8f97a8" stroke-width="1"/><polygon points="671.7,324.6 675.2,328.1 673.3,328.1 673.3,330.3 670.1,330.3 670.1,328.1 668.2,328.1" fill="#0b5fc6" stroke="#fff" stroke-width="1.6" stroke-linejoin="miter" paint-order="stroke"/>
<circle cx="678.3" cy="351.6" r="6.6" fill="#96846f" stroke="#8f97a8" stroke-width="1"/><polygon points="678.3,348.7 681.8,352.2 679.9,352.2 679.9,354.4 676.7,354.4 676.7,352.2 674.8,352.2" fill="#0b5fc6" stroke="#fff" stroke-width="1.6" stroke-linejoin="miter" paint-order="stroke"/>
<circle cx="690.5" cy="405.5" r="6.6" fill="#96846f" stroke="#8f97a8" stroke-width="1"/><polygon points="690.5,402.6 694.0,406.1 692.1,406.1 692.1,408.3 688.9,408.3 688.9,406.1 687.0,406.1" fill="#0b5fc6" stroke="#fff" stroke-width="1.6" stroke-linejoin="miter" paint-order="stroke"/>
<circle cx="706.6" cy="424.7" r="6.6" fill="#96846f" stroke="#8f97a8" stroke-width="1"/><polygon points="706.6,421.8 710.1,425.3 708.2,425.3 708.2,427.5 705.0,427.5 705.0,425.3 703.1,425.3" fill="#0b5fc6" stroke="#fff" stroke-width="1.6" stroke-linejoin="miter" paint-order="stroke"/>
<circle cx="1116.4" cy="332.5" r="6.6" fill="#96846f" stroke="#8f97a8" stroke-width="1"/><polygon points="1116.4,335.4 1119.9,331.9 1118.0,331.9 1118.0,329.7 1114.8,329.7 1114.8,331.9 1112.9,331.9" fill="#e8421c" stroke="#fff" stroke-width="1.6" stroke-linejoin="miter" paint-order="stroke"/>
<circle cx="1182.5" cy="335.6" r="6.6" fill="#96846f" stroke="#8f97a8" stroke-width="1"/><polygon points="1182.5,338.5 1186.0,335.0 1184.1,335.0 1184.1,332.8 1180.9,332.8 1180.9,335.0 1179.0,335.0" fill="#e8421c" stroke="#fff" stroke-width="1.6" stroke-linejoin="miter" paint-order="stroke"/>
</g>
<path d="M14.5,72.5H1463.5V689.5H14.5Z" fill="none" stroke="#fff" stroke-width="1" shape-rendering="crispEdges"/>
<path d="M1464,97.5H1468M1464,130.5H1468M1464,163.5H1468M1464,196.5H1468M1464,229.5H1468M1464,261.5H1468M1464,294.5H1468M1464,327.5H1468M1464,360.5H1468M1464,393.5H1468M1464,426.5H1468M1464,459.5H1468M1464,492.5H1468M1464,525.5H1468M1464,557.5H1468M1464,590.5H1468M1464,623.5H1468M1464,656.5H1468" stroke="#fff" stroke-width="1" fill="none" shape-rendering="crispEdges"/>
<text x="1469.6" y="101.2" class="ax" textLength="31.6" lengthAdjust="spacingAndGlyphs">1.18120</text>
<text x="1469.6" y="134.2" class="ax" textLength="31.6" lengthAdjust="spacingAndGlyphs">1.18015</text>
<text x="1469.6" y="167.2" class="ax" textLength="31.6" lengthAdjust="spacingAndGlyphs">1.17910</text>
<text x="1469.6" y="200.2" class="ax" textLength="31.6" lengthAdjust="spacingAndGlyphs">1.17805</text>
<text x="1469.6" y="233.2" class="ax" textLength="31.6" lengthAdjust="spacingAndGlyphs">1.17700</text>
<text x="1469.6" y="265.2" class="ax" textLength="31.6" lengthAdjust="spacingAndGlyphs">1.17595</text>
<text x="1469.6" y="298.2" class="ax" textLength="31.6" lengthAdjust="spacingAndGlyphs">1.17490</text>
<text x="1469.6" y="331.2" class="ax" textLength="31.6" lengthAdjust="spacingAndGlyphs">1.17385</text>
<text x="1469.6" y="364.2" class="ax" textLength="31.6" lengthAdjust="spacingAndGlyphs">1.17280</text>
<text x="1469.6" y="397.2" class="ax" textLength="31.6" lengthAdjust="spacingAndGlyphs">1.17175</text>
<text x="1469.6" y="430.2" class="ax" textLength="31.6" lengthAdjust="spacingAndGlyphs">1.17070</text>
<text x="1469.6" y="463.2" class="ax" textLength="31.6" lengthAdjust="spacingAndGlyphs">1.16965</text>
<text x="1469.6" y="496.2" class="ax" textLength="31.6" lengthAdjust="spacingAndGlyphs">1.16860</text>
<text x="1469.6" y="529.2" class="ax" textLength="31.6" lengthAdjust="spacingAndGlyphs">1.16755</text>
<text x="1469.6" y="561.2" class="ax" textLength="31.6" lengthAdjust="spacingAndGlyphs">1.16650</text>
<text x="1469.6" y="594.2" class="ax" textLength="31.6" lengthAdjust="spacingAndGlyphs">1.16545</text>
<text x="1469.6" y="627.2" class="ax" textLength="31.6" lengthAdjust="spacingAndGlyphs">1.16440</text>
<text x="1469.6" y="660.2" class="ax" textLength="31.6" lengthAdjust="spacingAndGlyphs">1.16335</text>
<path d="M14.5,690V694M78.5,690V694M142.5,690V694M206.5,690V694M270.5,690V694M334.5,690V694M398.5,690V694M462.5,690V694M526.5,690V694M590.5,690V694M654.5,690V694M718.5,690V694M782.5,690V694M846.5,690V694M910.5,690V694M974.5,690V694M1038.5,690V694M1102.5,690V694M1166.5,690V694" stroke="#fff" stroke-width="1" fill="none" shape-rendering="crispEdges"/>
<text x="14.8" y="702.0" class="ax" textLength="44.4" lengthAdjust="spacingAndGlyphs">1 Oct 2025</text>
<text x="78.8" y="702.0" class="ax" textLength="47.4" lengthAdjust="spacingAndGlyphs">1 Oct 14:30</text>
<text x="142.8" y="702.0" class="ax" textLength="47.4" lengthAdjust="spacingAndGlyphs">1 Oct 17:10</text>
<text x="206.8" y="702.0" class="ax" textLength="47.4" lengthAdjust="spacingAndGlyphs">1 Oct 19:50</text>
<text x="270.8" y="702.0" class="ax" textLength="47.4" lengthAdjust="spacingAndGlyphs">1 Oct 22:30</text>
<text x="334.8" y="702.0" class="ax" textLength="47.4" lengthAdjust="spacingAndGlyphs">2 Oct 01:20</text>
<text x="398.8" y="702.0" class="ax" textLength="47.4" lengthAdjust="spacingAndGlyphs">2 Oct 04:00</text>
<text x="462.8" y="702.0" class="ax" textLength="47.4" lengthAdjust="spacingAndGlyphs">2 Oct 06:40</text>
<text x="526.8" y="702.0" class="ax" textLength="47.4" lengthAdjust="spacingAndGlyphs">2 Oct 09:20</text>
<text x="590.8" y="702.0" class="ax" textLength="47.4" lengthAdjust="spacingAndGlyphs">2 Oct 12:00</text>
<text x="654.8" y="702.0" class="ax" textLength="47.4" lengthAdjust="spacingAndGlyphs">2 Oct 14:40</text>
<text x="718.8" y="702.0" class="ax" textLength="47.4" lengthAdjust="spacingAndGlyphs">2 Oct 17:20</text>
<text x="782.8" y="702.0" class="ax" textLength="47.4" lengthAdjust="spacingAndGlyphs">2 Oct 20:00</text>
<text x="846.8" y="702.0" class="ax" textLength="47.4" lengthAdjust="spacingAndGlyphs">2 Oct 22:40</text>
<text x="910.8" y="702.0" class="ax" textLength="47.4" lengthAdjust="spacingAndGlyphs">3 Oct 01:30</text>
<text x="974.8" y="702.0" class="ax" textLength="47.4" lengthAdjust="spacingAndGlyphs">3 Oct 04:10</text>
<text x="1038.8" y="702.0" class="ax" textLength="47.4" lengthAdjust="spacingAndGlyphs">3 Oct 06:50</text>
<text x="1102.8" y="702.0" class="ax" textLength="47.4" lengthAdjust="spacingAndGlyphs">3 Oct 09:30</text>
<text x="1166.8" y="702.0" class="ax" textLength="47.4" lengthAdjust="spacingAndGlyphs">3 Oct 12:10</text>
<rect x="1466" y="329" width="39" height="11" fill="#7b8ca5"/>
<text x="1469.7" y="337.9" class="ax" textLength="32.1" lengthAdjust="spacingAndGlyphs" style="fill:#000;stroke:#000">1.17364</text>
<polygon points="1179.7,73 1189.3,73 1184.5,78.2" fill="#7d8ba1"/>
<rect x="19.7" y="78.5" width="13.6" height="10" fill="#fff"/>
<rect x="20.2" y="79" width="6.3" height="9" fill="#fff0ee"/><rect x="26.5" y="79" width="6.3" height="9" fill="#d8ecfc"/>
<path d="M26.5,78.5H19.7V88.5H26.5" fill="none" stroke="#d8281e" stroke-width="1.1"/>
<path d="M26.5,78.5H33.3V88.5H26.5" fill="none" stroke="#0a5aa8" stroke-width="1.1"/>
<path d="M21.3,80.5H25.7M21.3,83.5H25.7M21.3,86.5H25.7" stroke="#d8281e" stroke-width="1"/>
<path d="M27.3,80.5H31.9M27.3,83.5H31.9M27.3,86.5H31.9" stroke="#0a5aa8" stroke-width="1"/>
<path d="M40.5,78.5H43.6V82.6H46.6V88.5H40.5Z" fill="#ffd9d0" stroke="#d8281e" stroke-width="1.1"/>
<path d="M54.5,78.5H51.4V82.6H48.6V88.5H54.5Z" fill="#bcdffb" stroke="#0a5aa8" stroke-width="1.1"/>
<rect x="45.2" y="78.4" width="4.6" height="2.5" fill="#fff" stroke="#8a8282" stroke-width="0.9"/>
<text x="60.8" y="87.2" class="ct" textLength="142.1" lengthAdjust="spacingAndGlyphs">EURUSD, M5:  Euro vs US Dollar</text>
<text x="1288.5" y="86.7" class="ct" textLength="152.1" lengthAdjust="spacingAndGlyphs">Expert Advisor Return to SMA tester</text>
<path d="M1445.2,82 L1452.4,78.8 L1459.8,82 L1452.4,85.2 Z" fill="#a6d6fb" stroke="#1a72c0" stroke-width="0.9" stroke-linejoin="round"/>
<path d="M1448.4,84 V86.8 Q1452.4,89.2 1456.4,86.8 V84 L1452.4,85.8 Z" fill="#c8e6fd" stroke="#1a72c0" stroke-width="0.9" stroke-linejoin="round"/>
<path d="M1446.3,82.6 V87.6" stroke="#1a72c0" stroke-width="0.9"/><rect x="1445.1" y="87" width="2.4" height="2.3" fill="#1a72c0"/>
<rect x="15" y="93" width="76.4" height="24.6" fill="#add8e6"/><path d="M15.5,117.6V93.5H91.4" fill="none" stroke="#d4ecf4" stroke-width="1"/><path d="M15,117.1H90.9V93" fill="none" stroke="#86b4c4" stroke-width="1"/>
<text x="25.8" y="110.2" class="btn" textLength="48.1" lengthAdjust="spacingAndGlyphs">КУПИТЬ</text>
<rect x="95.8" y="93" width="80.2" height="24.6" fill="#fbaa5a"/><path d="M96.3,117.6V93.5H176" fill="none" stroke="#ffce9a" stroke-width="1"/><path d="M95.8,117.1H175.5V93" fill="none" stroke="#d48a3c" stroke-width="1"/>
<text x="105.2" y="110.2" class="btn" textLength="60.5" lengthAdjust="spacingAndGlyphs">ПРОДАТЬ</text>
<rect x="181" y="93" width="80.2" height="24.6" fill="#dce6f0"/><path d="M181.5,117.6V93.5H261.2" fill="none" stroke="#f2f6fa" stroke-width="1"/><path d="M181,117.1H260.7V93" fill="none" stroke="#b4c0cc" stroke-width="1"/>
<text x="191.0" y="110.2" class="btn" textLength="59.0" lengthAdjust="spacingAndGlyphs">ЗАКРЫТЬ</text>
<path d="M193.5,180.9 C215,179.6 232,181.2 250,180.4 C265,180.8 275,180.6 282,180.8 A7.6,7.6 0 0 1 282,196 C262,196.4 240,195.8 225,196.2 C212,196.4 203,196 193.5,196 A7.6,7.6 0 0 1 193.5,180.9 Z" fill="#b2d647" fill-opacity="0.56"/>
<g opacity="0.56"><polygon points="13,228 14.8,224 20,221.8 40,221.4 64,221.6 90,222.4 106,223.4 118,224.6 127.5,226.2 133.2,228.6 136.2,233 134.2,237.8 128,239.7 115,239.9 106.5,238.2 101.8,235.8 97,240 88,241.3 70,240.3 50,237.7 30,235.7 18.5,234 14.5,231.6" fill="#b2d647" stroke="#b2d647" stroke-width="2" stroke-linejoin="round"/></g>
<circle cx="74.4" cy="240.6" r="6.8" fill="#b2d647" fill-opacity="0.36"/>
<polygon points="238.7,380.4 479.9,308.4 470.4,285.3 527.7,312 488.5,362 487.6,338.6" fill="#4780be"/>
<polygon points="557.2,298.7 652.8,318 654.5,306.8 672.6,331.8 643,343.8 647.6,334.4" fill="#d25547"/>
<polygon points="703.9,447.3 1085.8,347.6 1075.8,324.8 1132.5,353.6 1092.7,403.3 1091.7,378.4" fill="#4780be"/>
<polygon points="1202.6,299.1 1360.7,381.5 1368.7,360.9 1386.7,412.6 1331.7,419.6 1347,403.9" fill="#d25547"/>
<rect x="12" y="0" width="1498" height="19" fill="#fff"/>
<polygon points="25.4,0 28.6,0 26.4,3.6 32.5,3.6 32.5,10 29.5,10 29.5,5.9 22.9,5.9 22.9,4.4" fill="#7cc242"/>
<clipPath id="ttl"><rect x="12" y="0" width="1400" height="19"/></clipPath>
<g clip-path="url(#ttl)"><text x="41.4" y="7.6" class="ui" textLength="148.4" lengthAdjust="spacingAndGlyphs">68131 - EGlobalTrade-Demo:</text><text x="193.8" y="7.6" class="ui" textLength="111.5" lengthAdjust="spacingAndGlyphs">Демо-счет - Hedge -</text><text x="309.5" y="7.6" class="ui" textLength="211.5" lengthAdjust="spacingAndGlyphs">E-Global Trade and Finance Group, Inc. -</text><text x="524.6" y="7.6" class="ui" textLength="69.9" lengthAdjust="spacingAndGlyphs">[EURUSD,M5]</text></g>
<rect x="1395.7" y="3" width="12" height="1" fill="#000"/>
<rect x="1442.5" y="-3" width="9" height="10" fill="none" stroke="#000" stroke-width="1"/>
<path d="M1488.3,-1.7 L1497.7,7.7 M1497.7,-1.7 L1488.3,7.7" stroke="#000" stroke-width="1.1" fill="none"/>
<rect x="12" y="19" width="1498" height="20.5" fill="#f0f0f0"/>
<line x1="22.1" y1="21.4" x2="22.1" y2="34.9" stroke="#1ca01c" stroke-width="1.05"/><rect x="20.4" y="23.6" width="3.5" height="9.2" fill="#d2f2d2" stroke="#1ca01c" stroke-width="1.05"/>
<line x1="28.6" y1="20.9" x2="28.6" y2="35.8" stroke="#1ca01c" stroke-width="1.05"/><rect x="26.8" y="23.1" width="3.6" height="10.2" fill="#d2f2d2" stroke="#1ca01c" stroke-width="1.05"/>
<text x="44.8" y="32.9" class="ui" textLength="27.8" lengthAdjust="spacingAndGlyphs">Файл</text>
<text x="95.4" y="32.9" class="ui" textLength="19.5" lengthAdjust="spacingAndGlyphs">Вид</text>
<text x="137.2" y="32.9" class="ui" textLength="41.3" lengthAdjust="spacingAndGlyphs">Вставка</text>
<text x="201.1" y="32.9" class="ui" textLength="47.3" lengthAdjust="spacingAndGlyphs">Графики</text>
<text x="271.9" y="32.9" class="ui" textLength="38.9" lengthAdjust="spacingAndGlyphs">Сервис</text>
<text x="333.4" y="32.9" class="ui" textLength="29.0" lengthAdjust="spacingAndGlyphs">Окно</text>
<text x="384.0" y="32.9" class="ui" textLength="46.3" lengthAdjust="spacingAndGlyphs">Справка</text>
<rect x="1464" y="30" width="8" height="2" fill="#b4b4b4"/>
<rect x="1486" y="24.6" width="5.5" height="5" fill="none" stroke="#b4b4b4" stroke-width="1"/>
<rect x="1483.5" y="27" width="5.5" height="5" fill="#f0f0f0" stroke="#b4b4b4" stroke-width="1.8"/>
<path d="M1502.6,26.6 L1508,31.8 M1508,26.6 L1502.6,31.8" stroke="#b4b4b4" stroke-width="2" fill="none"/>
<rect x="12" y="39" width="1498" height="1" fill="#a6a6a6"/>
<rect x="12" y="40" width="1498" height="1" fill="#fbfbfb"/>
<rect x="12" y="41" width="1498" height="28" fill="#f0f0f0"/>
<rect x="12" y="69" width="1498" height="1" fill="#fcfcfc"/>
<rect x="14.2" y="43.5" width="1.6" height="1.6" fill="#c4c4c4"/><rect x="15.0" y="42.7" width="1" height="1" fill="#d8d8d8"/><rect x="14.2" y="47.2" width="1.6" height="1.6" fill="#c4c4c4"/><rect x="15.0" y="46.4" width="1" height="1" fill="#d8d8d8"/><rect x="14.2" y="50.9" width="1.6" height="1.6" fill="#c4c4c4"/><rect x="15.0" y="50.1" width="1" height="1" fill="#d8d8d8"/><rect x="14.2" y="54.6" width="1.6" height="1.6" fill="#c4c4c4"/><rect x="15.0" y="53.8" width="1" height="1" fill="#d8d8d8"/><rect x="14.2" y="58.3" width="1.6" height="1.6" fill="#c4c4c4"/><rect x="15.0" y="57.5" width="1" height="1" fill="#d8d8d8"/><rect x="14.2" y="62.0" width="1.6" height="1.6" fill="#c4c4c4"/><rect x="15.0" y="61.2" width="1" height="1" fill="#d8d8d8"/><rect x="14.2" y="65.7" width="1.6" height="1.6" fill="#c4c4c4"/><rect x="15.0" y="64.9" width="1" height="1" fill="#d8d8d8"/>
<path d="M25.5,47 V63.5 H42" fill="none" stroke="#9c9c9c" stroke-width="1"/>
<path d="M28,55.6 L31.7,51.8 L36,57.6 L41.8,51.8" fill="none" stroke="#1c66a8" stroke-width="1.3"/>
<polygon points="47.6,54.6 55.0,54.6 51.3,58.7" fill="#000"/>
<rect x="65.6" y="46.4" width="18" height="14.8" rx="2.6" fill="#fff" stroke="#1c66a8" stroke-width="1.3"/>
<path d="M67.2,62.8 H82 M68.6,64.5 H80.6" stroke="#1c66a8" stroke-width="1.1" fill="none"/>
<path d="M69.3,52.4 L72.5,50.5 L75.2,52.3 L79.6,49.4" fill="none" stroke="#1c66a8" stroke-width="1.1"/>
<rect x="67.75" y="55.6" width="1.1" height="2.2" fill="#1ca01c"/>
<rect x="70.85" y="54.4" width="1.1" height="3.4" fill="#1ca01c"/>
<rect x="73.95" y="56" width="1.1" height="1.8" fill="#1ca01c"/>
<rect x="77.05" y="55" width="1.1" height="2.8" fill="#1ca01c"/>
<rect x="79.85" y="53.9" width="1.1" height="3.9" fill="#1ca01c"/>
<polygon points="88.7,54.6 96.1,54.6 92.4,58.7" fill="#000"/>
<rect x="109.2" y="47.4" width="16.4" height="16.2" rx="2.2" fill="#fbc800" stroke="#d29c14" stroke-width="1"/>
<text x="117.4" y="60.3" text-anchor="middle" style="font-size:13.5px;fill:#b98a0c">$</text>
<rect x="135.0" y="43" width="1" height="24.5" fill="#9c9c9c"/>
<text x="146.7" y="60.1" class="tf" textLength="17.5" lengthAdjust="spacingAndGlyphs">IDE</text>
<polygon points="181.8,51.4 193.8,51.4 194.9,63.7 180.3,63.7" fill="#fccf00" stroke="#d4940c" stroke-width="1"/>
<polygon points="181.8,51.4 183.6,51.4 182.6,63.7 180.3,63.7" fill="#e6a400"/>
<path d="M184.2,54 V49.8 a2.4,2.7 0 0 1 4.8,0 V54 M186.8,51.4 V49.8 a2.4,2.7 0 0 1 4.8,0 V54" fill="none" stroke="#d4940c" stroke-width="1.1"/>
<circle cx="219.3" cy="55.5" r="1.9" fill="none" stroke="#bcbcbc" stroke-width="1.2"/>
<path d="M215.6,51.6 a5.4,5.4 0 0 0 0,7.8 M223,51.6 a5.4,5.4 0 0 1 0,7.8 M213,49.6 a8.4,8.4 0 0 0 0,11.8 M225.6,49.6 a8.4,8.4 0 0 1 0,11.8" fill="none" stroke="#bcbcbc" stroke-width="1.1"/>
<path d="M246.6,58.4 a3.5,3.5 0 0 1 -0.6,-6.9 a5,5 0 0 1 9.6,-0.6 a3.8,3.8 0 0 1 1,7.5 Z" fill="#bcdcf8" stroke="#1c66a8" stroke-width="1.3"/>
<path d="M251.5,58.6 V60.6 M243.2,61.6 H259.8" stroke="#1c66a8" stroke-width="1.2" fill="none"/>
<rect x="250.2" y="60.3" width="2.6" height="2.6" transform="rotate(45 251.5 61.6)" fill="#1c66a8"/>
<path d="M281,63.2 A8.6,8.6 0 1 1 291.6,53.2 M281.6,59.7 A5.2,5.2 0 1 1 288.2,53.6" fill="none" stroke="#1c66a8" stroke-width="1.3"/>
<circle cx="283.4" cy="55" r="1.9" fill="#1c66a8"/>
<circle cx="287.6" cy="59.6" r="4.9" fill="#e8fbe8" stroke="#1cac1c" stroke-width="1.3"/>
<path d="M284.8,59.6 H290.4 M287.6,56.8 V62.4" stroke="#1cac1c" stroke-width="1.3"/>
<rect x="301.0" y="43" width="1" height="24.5" fill="#9c9c9c"/>
<rect x="306.4" y="42.2" width="109.3" height="25.7" fill="#d6e4f4"/><rect x="305.6" y="41.6" width="1" height="26.3" fill="#a8a8a8"/><rect x="305.6" y="41.4" width="110.1" height="0.9" fill="#b4b4b4"/>
<polygon points="315,50.3 324.8,55.5 315,60.8" fill="#d8f4d8" stroke="#1fa31f" stroke-width="1.2"/>
<text x="334.4" y="60.3" class="ui" textLength="76.3" lengthAdjust="spacingAndGlyphs">Алготрейдинг</text>
<path d="M428.2,47.2 H436.4 a2.2,2.2 0 0 1 2.2,2.2 V60 L434.6,63.9 H428.2 a2.2,2.2 0 0 1 -2.2,-2.2 V49.4 a2.2,2.2 0 0 1 2.2,-2.2 Z" fill="#fff" stroke="#1c66a8" stroke-width="1.3"/>
<polygon points="438.6,60 434.6,63.9 434.6,60" fill="#1c66a8"/>
<path d="M429.2,54 H435.6 M432.4,50.8 V57.2" stroke="#1c66a8" stroke-width="1.3"/>
<text x="446.4" y="60.3" class="ui" textLength="73.1" lengthAdjust="spacingAndGlyphs">Новый ордер</text>
<rect x="530.0" y="43" width="1" height="24.5" fill="#9c9c9c"/>
<path d="M545.4,51.2 V63.5 M542.1,60.2 H545.4 M545.4,54.6 H548.7 M555.5,47.2 V59.8 M552.2,50.2 H555.5 M555.5,56.5 H558.8" stroke="#1ca01c" stroke-width="1.3" fill="none"/>
<line x1="578.3" y1="48" x2="578.3" y2="62.6" stroke="#1ca01c" stroke-width="1.2"/><rect x="576.2" y="50.2" width="4.2" height="10.0" fill="#d2f2d2" stroke="#1ca01c" stroke-width="1.2"/>
<line x1="586.7" y1="47.3" x2="586.7" y2="63.6" stroke="#1ca01c" stroke-width="1.2"/><rect x="584.6" y="49.2" width="4.2" height="12.3" fill="#d2f2d2" stroke="#1ca01c" stroke-width="1.2"/>
<rect x="599.2" y="42.2" width="28.8" height="25.7" fill="#d6e4f4"/><rect x="598.4" y="41.6" width="1" height="26.3" fill="#a8a8a8"/><rect x="598.4" y="41.4" width="29.6" height="0.9" fill="#b4b4b4"/>
<path d="M605.9,58.1 H608.5 L610.9,53.3 L614.2,60.6 L618.4,50.4 L620.7,55.5 H622.9" fill="none" stroke="#1ca01c" stroke-width="1.4" stroke-linejoin="round"/>
<rect x="631.9" y="43" width="1" height="24.5" fill="#9c9c9c"/>
<path d="M655.0,58.2 L660.8,63.8" stroke="#1c66a8" stroke-width="1.4"/>
<circle cx="650.6" cy="53.7" r="6" fill="#bcdcf8" stroke="#1c66a8" stroke-width="1.3"/>
<path d="M647.3,53.7 H653.9" stroke="#1c66a8" stroke-width="1.3"/>
<path d="M650.6,50.4 V57" stroke="#1c66a8" stroke-width="1.3"/>
<path d="M687.1,58.2 L692.9,63.8" stroke="#1c66a8" stroke-width="1.4"/>
<circle cx="682.7" cy="53.7" r="6" fill="#bcdcf8" stroke="#1c66a8" stroke-width="1.3"/>
<path d="M679.4,53.7 H686.0" stroke="#1c66a8" stroke-width="1.3"/>
<rect x="708.4" y="47.5" width="16.3" height="16.1" rx="2" fill="#bcdcf8" stroke="#1c66a8" stroke-width="1.3"/>
<path d="M716.5,47.5 V63.6 M708.4,55.6 H724.7" stroke="#1c66a8" stroke-width="1.3"/>
<rect x="733.9" y="43" width="1" height="24.5" fill="#9c9c9c"/>
<rect x="739.2" y="42.2" width="28.8" height="25.7" fill="#d6e4f4"/><rect x="738.4" y="41.6" width="1" height="26.3" fill="#a8a8a8"/><rect x="738.4" y="41.4" width="29.6" height="0.9" fill="#b4b4b4"/>
<line x1="746.5" y1="48.6" x2="746.5" y2="60.2" stroke="#1ca01c" stroke-width="1.1"/><rect x="745.2" y="50.2" width="2.5" height="8.5" fill="#d2f2d2" stroke="#1ca01c" stroke-width="1.1"/>
<line x1="750.6" y1="48" x2="750.6" y2="60.8" stroke="#1ca01c" stroke-width="1.1"/><rect x="749.4" y="49.4" width="2.4" height="9.8" fill="#d2f2d2" stroke="#1ca01c" stroke-width="1.1"/>
<path d="M754.2,54.4 H760.6 M757.6,51.4 L760.6,54.4 L757.6,57.4" fill="none" stroke="#1ca01c" stroke-width="1.3"/>
<path d="M763.5,47.3 V61.6" stroke="#1c66a8" stroke-width="1.4"/>
<rect x="745" y="63.8" width="19" height="1" fill="#a8a8a8"/>
<rect x="771.2" y="42.2" width="28.8" height="25.7" fill="#d6e4f4"/><rect x="770.4" y="41.6" width="1" height="26.3" fill="#a8a8a8"/><rect x="770.4" y="41.4" width="29.6" height="0.9" fill="#b4b4b4"/>
<line x1="778.2" y1="48.6" x2="778.2" y2="60.2" stroke="#1ca01c" stroke-width="1.1"/><rect x="777.0" y="50.2" width="2.4" height="8.5" fill="#d2f2d2" stroke="#1ca01c" stroke-width="1.1"/>
<line x1="782.5" y1="48" x2="782.5" y2="60.8" stroke="#1ca01c" stroke-width="1.1"/><rect x="781.2" y="49.4" width="2.5" height="9.8" fill="#d2f2d2" stroke="#1ca01c" stroke-width="1.1"/>
<path d="M786.5,47.3 V61.6" stroke="#1c66a8" stroke-width="1.4"/>
<path d="M789.4,54.4 H795.9 M792.4,51.4 L789.4,54.4 L792.4,57.4" fill="none" stroke="#1c66a8" stroke-width="1.3"/>
<rect x="777" y="63.8" width="19" height="1" fill="#a8a8a8"/>
<rect x="804.0" y="43" width="1" height="24.5" fill="#9c9c9c"/>
<path d="M821,64.4 H818 a3,3 0 0 1 -3,-3 V49.4 a3,3 0 0 1 3,-3 H830.4 a3,3 0 0 1 3,3 V53.4" fill="none" stroke="#1c66a8" stroke-width="1.3" stroke-dasharray="2.2 2"/>
<path d="M821.4,55.6 H823.6 L824.8,53.8 H829.4 L830.6,55.6 H832.4 a1.3,1.3 0 0 1 1.3,1.3 V63.2 a1.3,1.3 0 0 1 -1.3,1.3 H821.4 a1.3,1.3 0 0 1 -1.3,-1.3 V56.9 a1.3,1.3 0 0 1 1.3,-1.3 Z" fill="#bcdcf8" stroke="#1c66a8" stroke-width="1.2"/>
<circle cx="827" cy="59.8" r="2.1" fill="#e8f4fd" stroke="#1c66a8" stroke-width="1.2"/>
<rect x="842.0" y="43.5" width="1.6" height="1.6" fill="#c4c4c4"/><rect x="842.8" y="42.7" width="1" height="1" fill="#d8d8d8"/><rect x="842.0" y="47.2" width="1.6" height="1.6" fill="#c4c4c4"/><rect x="842.8" y="46.4" width="1" height="1" fill="#d8d8d8"/><rect x="842.0" y="50.9" width="1.6" height="1.6" fill="#c4c4c4"/><rect x="842.8" y="50.1" width="1" height="1" fill="#d8d8d8"/><rect x="842.0" y="54.6" width="1.6" height="1.6" fill="#c4c4c4"/><rect x="842.8" y="53.8" width="1" height="1" fill="#d8d8d8"/><rect x="842.0" y="58.3" width="1.6" height="1.6" fill="#c4c4c4"/><rect x="842.8" y="57.5" width="1" height="1" fill="#d8d8d8"/><rect x="842.0" y="62.0" width="1.6" height="1.6" fill="#c4c4c4"/><rect x="842.8" y="61.2" width="1" height="1" fill="#d8d8d8"/><rect x="842.0" y="65.7" width="1.6" height="1.6" fill="#c4c4c4"/><rect x="842.8" y="64.9" width="1" height="1" fill="#d8d8d8"/>
<rect x="848" y="42.2" width="29.0" height="25.7" fill="#d6e4f4"/><rect x="847.2" y="41.6" width="1" height="26.3" fill="#a8a8a8"/><rect x="847.2" y="41.4" width="29.8" height="0.9" fill="#b4b4b4"/>
<polygon points="856.8,49.2 869.8,54 865.4,56.2 870.3,61.2 868,62.7 863.2,57.9 861.3,61.8" fill="#bcdcf8" stroke="#1c66a8" stroke-width="1.3" stroke-linejoin="round"/>
<path d="M887,55.5 H904 M895.4,47 V64" stroke="#1c66a8" stroke-width="1.3"/>
<rect x="893.6" y="53.7" width="3.6" height="3.6" transform="rotate(45 895.4 55.5)" fill="#bcdcf8" stroke="#1c66a8" stroke-width="1.1"/>
<rect x="912.9" y="43" width="1" height="24.5" fill="#9c9c9c"/>
<path d="M933.4,46 V64.7" stroke="#1c66a8" stroke-width="1.3"/><circle cx="933.4" cy="55.5" r="2.3" fill="#bcdcf8" stroke="#1c66a8" stroke-width="1.3"/>
<path d="M956,55.5 H975" stroke="#1c66a8" stroke-width="1.3"/><circle cx="965.4" cy="55.5" r="2.3" fill="#bcdcf8" stroke="#1c66a8" stroke-width="1.3"/>
<path d="M990.3,62.6 L1004.6,48.4" stroke="#1c66a8" stroke-width="1.3"/><circle cx="990.3" cy="62.6" r="2.3" fill="#bcdcf8" stroke="#1c66a8" stroke-width="1.3"/><circle cx="1004.6" cy="48.4" r="2.3" fill="#bcdcf8" stroke="#1c66a8" stroke-width="1.3"/>
<path d="M1022.5,56.5 L1030.4,48.4 M1028.5,62.6 L1038.6,52.3" stroke="#1c66a8" stroke-width="1.3"/><circle cx="1022.5" cy="56.5" r="2.1" fill="#bcdcf8" stroke="#1c66a8" stroke-width="1.3"/><circle cx="1030.4" cy="48.4" r="2.1" fill="#bcdcf8" stroke="#1c66a8" stroke-width="1.3"/><circle cx="1028.5" cy="62.6" r="2.1" fill="#bcdcf8" stroke="#1c66a8" stroke-width="1.3"/>
<path d="M1052.4,47.5 H1071 M1052.4,52.5 H1071 M1052.4,57.6 H1071 M1052.4,62.6 H1071" stroke="#1c66a8" stroke-width="1.3"/><circle cx="1068.4" cy="52.5" r="2.1" fill="#bcdcf8" stroke="#1c66a8" stroke-width="1.3"/><circle cx="1054.6" cy="62.6" r="2.1" fill="#bcdcf8" stroke="#1c66a8" stroke-width="1.3"/>
<path d="M1087,49.1 H1100.2 M1093.6,49.1 V61.9" stroke="#1c66a8" stroke-width="1.4" fill="none"/>
<polygon points="1115.4,53.4 1123,53.4 1119.2,47.4" fill="#bcdcf8" stroke="#1c66a8" stroke-width="1.2" stroke-linejoin="round"/>
<circle cx="1128.4" cy="50.4" r="3.2" fill="#bcdcf8" stroke="#1c66a8" stroke-width="1.2"/>
<polygon points="1119.2,56.6 1122.9,59.3 1121.5,63.5 1116.9,63.5 1115.5,59.3" fill="#bcdcf8" stroke="#1c66a8" stroke-width="1.2" stroke-linejoin="round"/>
<rect x="1125.3" y="57.3" width="6.3" height="6.3" rx="0.8" fill="#bcdcf8" stroke="#1c66a8" stroke-width="1.2"/>
<polygon points="1137.7,54.9 1145.1,54.9 1141.4,59.0" fill="#000"/>
<rect x="1151.8" y="43.5" width="1.6" height="1.6" fill="#c4c4c4"/><rect x="1152.6" y="42.7" width="1" height="1" fill="#d8d8d8"/><rect x="1151.8" y="47.2" width="1.6" height="1.6" fill="#c4c4c4"/><rect x="1152.6" y="46.4" width="1" height="1" fill="#d8d8d8"/><rect x="1151.8" y="50.9" width="1.6" height="1.6" fill="#c4c4c4"/><rect x="1152.6" y="50.1" width="1" height="1" fill="#d8d8d8"/><rect x="1151.8" y="54.6" width="1.6" height="1.6" fill="#c4c4c4"/><rect x="1152.6" y="53.8" width="1" height="1" fill="#d8d8d8"/><rect x="1151.8" y="58.3" width="1.6" height="1.6" fill="#c4c4c4"/><rect x="1152.6" y="57.5" width="1" height="1" fill="#d8d8d8"/><rect x="1151.8" y="62.0" width="1.6" height="1.6" fill="#c4c4c4"/><rect x="1152.6" y="61.2" width="1" height="1" fill="#d8d8d8"/><rect x="1151.8" y="65.7" width="1.6" height="1.6" fill="#c4c4c4"/><rect x="1152.6" y="64.9" width="1" height="1" fill="#d8d8d8"/>
<rect x="1190.4" y="42.2" width="28.6" height="25.7" fill="#d6e4f4"/><rect x="1189.6" y="41.6" width="1" height="26.3" fill="#a8a8a8"/><rect x="1189.6" y="41.4" width="29.4" height="0.9" fill="#b4b4b4"/>
<text x="1165.7" y="60.1" class="tf" textLength="15.0" lengthAdjust="spacingAndGlyphs">M1</text>
<text x="1197.7" y="60.1" class="tf" textLength="15.9" lengthAdjust="spacingAndGlyphs">M5</text>
<text x="1226.8" y="60.1" class="tf" textLength="21.7" lengthAdjust="spacingAndGlyphs">M15</text>
<text x="1258.6" y="60.1" class="tf" textLength="22.3" lengthAdjust="spacingAndGlyphs">M30</text>
<text x="1295.0" y="60.1" class="tf" textLength="12.2" lengthAdjust="spacingAndGlyphs">H1</text>
<text x="1326.7" y="60.1" class="tf" textLength="14.1" lengthAdjust="spacingAndGlyphs">H4</text>
<clipPath id="d1c"><rect x="1350" y="42" width="13.2" height="26"/></clipPath>
<g clip-path="url(#d1c)"><text x="1358.4" y="60.1" class="tf" textLength="15.0" lengthAdjust="spacingAndGlyphs">D1</text></g>
<circle cx="1382.6" cy="54.4" r="5.4" fill="none" stroke="#000" stroke-width="1.3"/>
<path d="M1386.5,58.3 L1390,61.7" stroke="#000" stroke-width="1.4"/>
<circle cx="1413.8" cy="55.6" r="6.3" fill="none" stroke="#000" stroke-width="1.2"/>
<circle cx="1413.8" cy="53.4" r="2.3" fill="none" stroke="#000" stroke-width="1.1"/>
<path d="M1409.2,59.8 a5.4,4.4 0 0 1 9.2,0" fill="none" stroke="#000" stroke-width="1.1"/>
<circle cx="1421.6" cy="51.2" r="7.3" fill="#e0391f"/>
<text x="1421.4" y="55.6" text-anchor="middle" style="font-size:12px;fill:#fff">1</text>
<path d="M1451.5,48.4 L1454.9,52 H1453 V54.9 H1450 V52 H1448.1 Z" fill="#e6f8e6" stroke="#14a014" stroke-width="1.1" stroke-linejoin="round"/>
<text x="1445.7" y="62.8" textLength="11.6" lengthAdjust="spacingAndGlyphs" style="font-size:7.8px;font-weight:bold;fill:#14a014">LVL</text>
<rect x="1467.5" y="49.6" width="41.3" height="12.8" fill="#fff" stroke="#8a8a8a" stroke-width="1"/>
<rect x="1468.4" y="50.5" width="6.6" height="11" fill="#3fd93f"/>
<rect x="12" y="711" width="1498" height="25" fill="#f0f0f0"/>
<rect x="12" y="731" width="1498" height="1" fill="#a2a2a2"/>
<rect x="12" y="711" width="1498" height="1" fill="#fafafa"/>
<rect x="12" y="732" width="1498" height="1" fill="#fcfcfc"/><rect x="12" y="733" width="1498" height="3" fill="#f2f2f2"/>
<rect x="804.5" y="734" width="1" height="2" fill="#707070"/>
<rect x="951.0" y="734" width="1" height="2" fill="#707070"/>
<rect x="1049.3" y="734" width="1" height="2" fill="#707070"/>
<rect x="1120.3" y="734" width="1" height="2" fill="#707070"/>
<rect x="1191.1" y="734" width="1" height="2" fill="#707070"/>
<rect x="1258.8" y="734" width="1" height="2" fill="#707070"/>
<rect x="1328.9" y="734" width="1" height="2" fill="#707070"/>
<rect x="1395.1" y="734" width="1" height="2" fill="#707070"/>
<rect x="105.6" y="710.3" width="82.6" height="18.4" fill="#fff" stroke="#1a1a1a" stroke-width="1"/>
<rect x="188.6" y="712" width="1" height="17.6" fill="#8c8c8c"/><rect x="107" y="729.2" width="82.6" height="1" fill="#8c8c8c"/>
<text x="115.3" y="724.9" class="tab" textLength="63.2" lengthAdjust="spacingAndGlyphs" style="fill:#000">EURUSD,M5</text>
<text x="28.5" y="724.9" class="tab" textLength="63.3" lengthAdjust="spacingAndGlyphs">GBPUSD,M5</text>
<text x="201.4" y="724.9" class="tab" textLength="65.4" lengthAdjust="spacingAndGlyphs">AUDUSD,M5</text>
<text x="288.7" y="724.9" class="tab" textLength="63.2" lengthAdjust="spacingAndGlyphs">EURUSD,M5</text>
<text x="373.8" y="724.9" class="tab" textLength="62.9" lengthAdjust="spacingAndGlyphs">EURUSD,M5</text>
<text x="459.8" y="724.9" class="tab" textLength="68.7" lengthAdjust="spacingAndGlyphs">EURGBP,M15</text>
<text x="554.3" y="724.9" class="tab" textLength="71.3" lengthAdjust="spacingAndGlyphs">AUDUSD,M15</text>
<text x="648.7" y="724.9" class="tab" textLength="63.2" lengthAdjust="spacingAndGlyphs">EURUSD,M5</text>
<text x="735.0" y="724.9" class="tab" textLength="57.4" lengthAdjust="spacingAndGlyphs">$US500,M5</text>
<text x="815.5" y="724.9" class="tab" textLength="53.6" lengthAdjust="spacingAndGlyphs">$USDX,M5</text>
<text x="893.1" y="724.9" class="tab" textLength="68.7" lengthAdjust="spacingAndGlyphs">EURGBP,M15</text>
<text x="986.4" y="724.9" class="tab" textLength="68.0" lengthAdjust="spacingAndGlyphs">EURUSD,M15</text>
<text x="1078.0" y="724.9" class="tab" textLength="70.8" lengthAdjust="spacingAndGlyphs">XAUUSD,M15</text>
<text x="1171.9" y="724.9" class="tab" textLength="73.7" lengthAdjust="spacingAndGlyphs">XAGUSD,Daily</text>
<text x="1268.2" y="724.9" class="tab" textLength="62.6" lengthAdjust="spacingAndGlyphs">EURUSD,M5</text>
<text x="1354.4" y="724.9" class="tab" textLength="61.7" lengthAdjust="spacingAndGlyphs">AUDJPY,M5</text>
<clipPath id="nzc"><rect x="1430" y="711" width="35.6" height="20"/></clipPath>
<g clip-path="url(#nzc)"><text x="1439.4" y="724.9" class="tab" textLength="66.0" lengthAdjust="spacingAndGlyphs">NZDCAD,M5</text></g>
<rect x="277.6" y="713" width="1" height="14" fill="#5c5c5c"/>
<rect x="363.2" y="713" width="1" height="14" fill="#5c5c5c"/>
<rect x="448.0" y="713" width="1" height="14" fill="#5c5c5c"/>
<rect x="540.9" y="713" width="1" height="14" fill="#5c5c5c"/>
<rect x="637.6" y="713" width="1" height="14" fill="#5c5c5c"/>
<rect x="723.2" y="713" width="1" height="14" fill="#5c5c5c"/>
<rect x="803.7" y="713" width="1" height="14" fill="#5c5c5c"/>
<rect x="880.9" y="713" width="1" height="14" fill="#5c5c5c"/>
<rect x="973.9" y="713" width="1" height="14" fill="#5c5c5c"/>
<rect x="1067.0" y="713" width="1" height="14" fill="#5c5c5c"/>
<rect x="1160.1" y="713" width="1" height="14" fill="#5c5c5c"/>
<rect x="1256.9" y="713" width="1" height="14" fill="#5c5c5c"/>
<rect x="1341.9" y="713" width="1" height="14" fill="#5c5c5c"/>
<rect x="1426.9" y="713" width="1" height="14" fill="#5c5c5c"/>
<polygon points="1482.2,717.2 1482.2,724 1478.6,720.6" fill="#000"/>
<polygon points="1499.8,717.2 1499.8,724 1503.4,720.6" fill="#000"/>
<defs><linearGradient id="lsh" x1="0" x2="1" y1="0" y2="0"><stop offset="0" stop-color="#000" stop-opacity="0"/><stop offset="0.55" stop-color="#000" stop-opacity="0.10"/><stop offset="1" stop-color="#000" stop-opacity="0.42"/></linearGradient><linearGradient id="ltop" x1="0" x2="0" y1="0" y2="1"><stop offset="0" stop-color="#d4d4d4"/><stop offset="1" stop-color="#efefef"/></linearGradient><clipPath id="lclip"><rect x="0" y="0" width="11.6" height="736"/></clipPath></defs>
<g clip-path="url(#lclip)">
<rect x="0" y="0" width="12" height="78" fill="#efefef"/>
<rect x="0" y="0" width="12" height="6" fill="url(#ltop)"/>
<rect x="0" y="77.8" width="12" height="3.6" fill="#4a6aae"/>
<rect x="0" y="81.3" width="12" height="39.2" fill="#e8b42d"/>
<rect x="0" y="120.5" width="12" height="34" fill="#e8eaf4"/>
<rect x="0" y="154.5" width="12" height="134" fill="#fdfdfe"/>
<rect x="0" y="288.4" width="12" height="23.0" fill="#eaecf5"/>
<rect x="0" y="311.4" width="12" height="30.2" fill="#f8f9fc"/>
<rect x="0" y="341.6" width="12" height="31.8" fill="#eaecf5"/>
<rect x="0" y="373.4" width="12" height="27.6" fill="#f8f9fc"/>
<rect x="0" y="401" width="12" height="27.5" fill="#f8f9fc"/>
<rect x="0" y="428.5" width="12" height="30.5" fill="#eaecf5"/>
<rect x="0" y="459" width="12" height="28.3" fill="#dadbe3"/>
<rect x="0" y="487.3" width="12" height="27.7" fill="#f8f9fc"/>
<rect x="0" y="515" width="12" height="28.9" fill="#eaecf5"/>
<rect x="0" y="543.9" width="12" height="27.6" fill="#f8f9fc"/>
<rect x="0" y="571.5" width="12" height="29.5" fill="#eaecf5"/>
<rect x="0" y="601" width="12" height="29.0" fill="#f8f9fc"/>
<rect x="0" y="630" width="12" height="23.0" fill="#dadbe3"/>
<rect x="0" y="653" width="12" height="30.0" fill="#f8f9fc"/>
<rect x="0" y="683" width="12" height="24.0" fill="#eaecf5"/>
<rect x="0" y="707" width="12" height="29.0" fill="#f8f9fc"/>
<text x="-3.6" y="67.2" style="font-size:12px;fill:#111">а</text>
<text x="-4.8" y="102.6" style="font-size:18px;fill:#141414;stroke:#141414;stroke-width:0.3px">ру</text>
<text x="-3.2" y="146.4" style="font-size:14px;fill:#5e6ea6">еЕ</text>
<text x="-6.5" y="277.3" style="font-size:21.5px;font-weight:bold;fill:#2a2a2e">ас</text>
<rect x="0" y="309.6" width="12" height="1" fill="#3a55a8"/>
<text x="-2.6" y="308" style="font-size:12.6px;fill:#3a55a8">не</text>
<text x="-2.6" y="335" style="font-size:12.6px;fill:#46568e">ыі</text>
<text x="-2.6" y="364.4" style="font-size:12.6px;fill:#46568e">од</text>
<text x="-2.6" y="393.8" style="font-size:12.6px;fill:#46568e">0м</text>
<text x="-2.6" y="421.5" style="font-size:12.6px;fill:#46568e">нг</text>
<text x="-2.6" y="451" style="font-size:12.6px;fill:#46568e">ра</text>
<rect x="0" y="480.6" width="12" height="1" fill="#3a55a8"/>
<text x="-2.6" y="479" style="font-size:12.6px;fill:#3a55a8;font-weight:bold">ор</text>
<text x="-2.6" y="508" style="font-size:12.6px;fill:#46568e">нг</text>
<text x="-2.6" y="538" style="font-size:12.6px;fill:#46568e">ис</text>
<text x="-2.6" y="563.5" style="font-size:12.6px;fill:#46568e">то</text>
<text x="-2.6" y="591.8" style="font-size:12.6px;fill:#46568e">ия</text>
<text x="0.6" y="621" style="font-size:12px;fill:#3c3c46">31</text>
<rect x="0" y="647.6" width="12" height="1" fill="#3a55a8"/>
<text x="-2.6" y="646" style="font-size:12.6px;fill:#3a55a8;font-weight:bold">нг</text>
<text x="0.6" y="675.4" style="font-size:12px;fill:#3c3c46">89</text>
<text x="2.4" y="699" style="font-size:12.6px;fill:#46568e">,</text>
<text x="-2.6" y="731" style="font-size:12.6px;fill:#46568e">Те</text>
</g>
<rect x="8.2" y="0" width="3.4" height="736" fill="url(#lsh)"/>
<rect x="11.4" y="0" width="1.2" height="736" fill="#5c5c5c"/>
</svg>
</body></html>
